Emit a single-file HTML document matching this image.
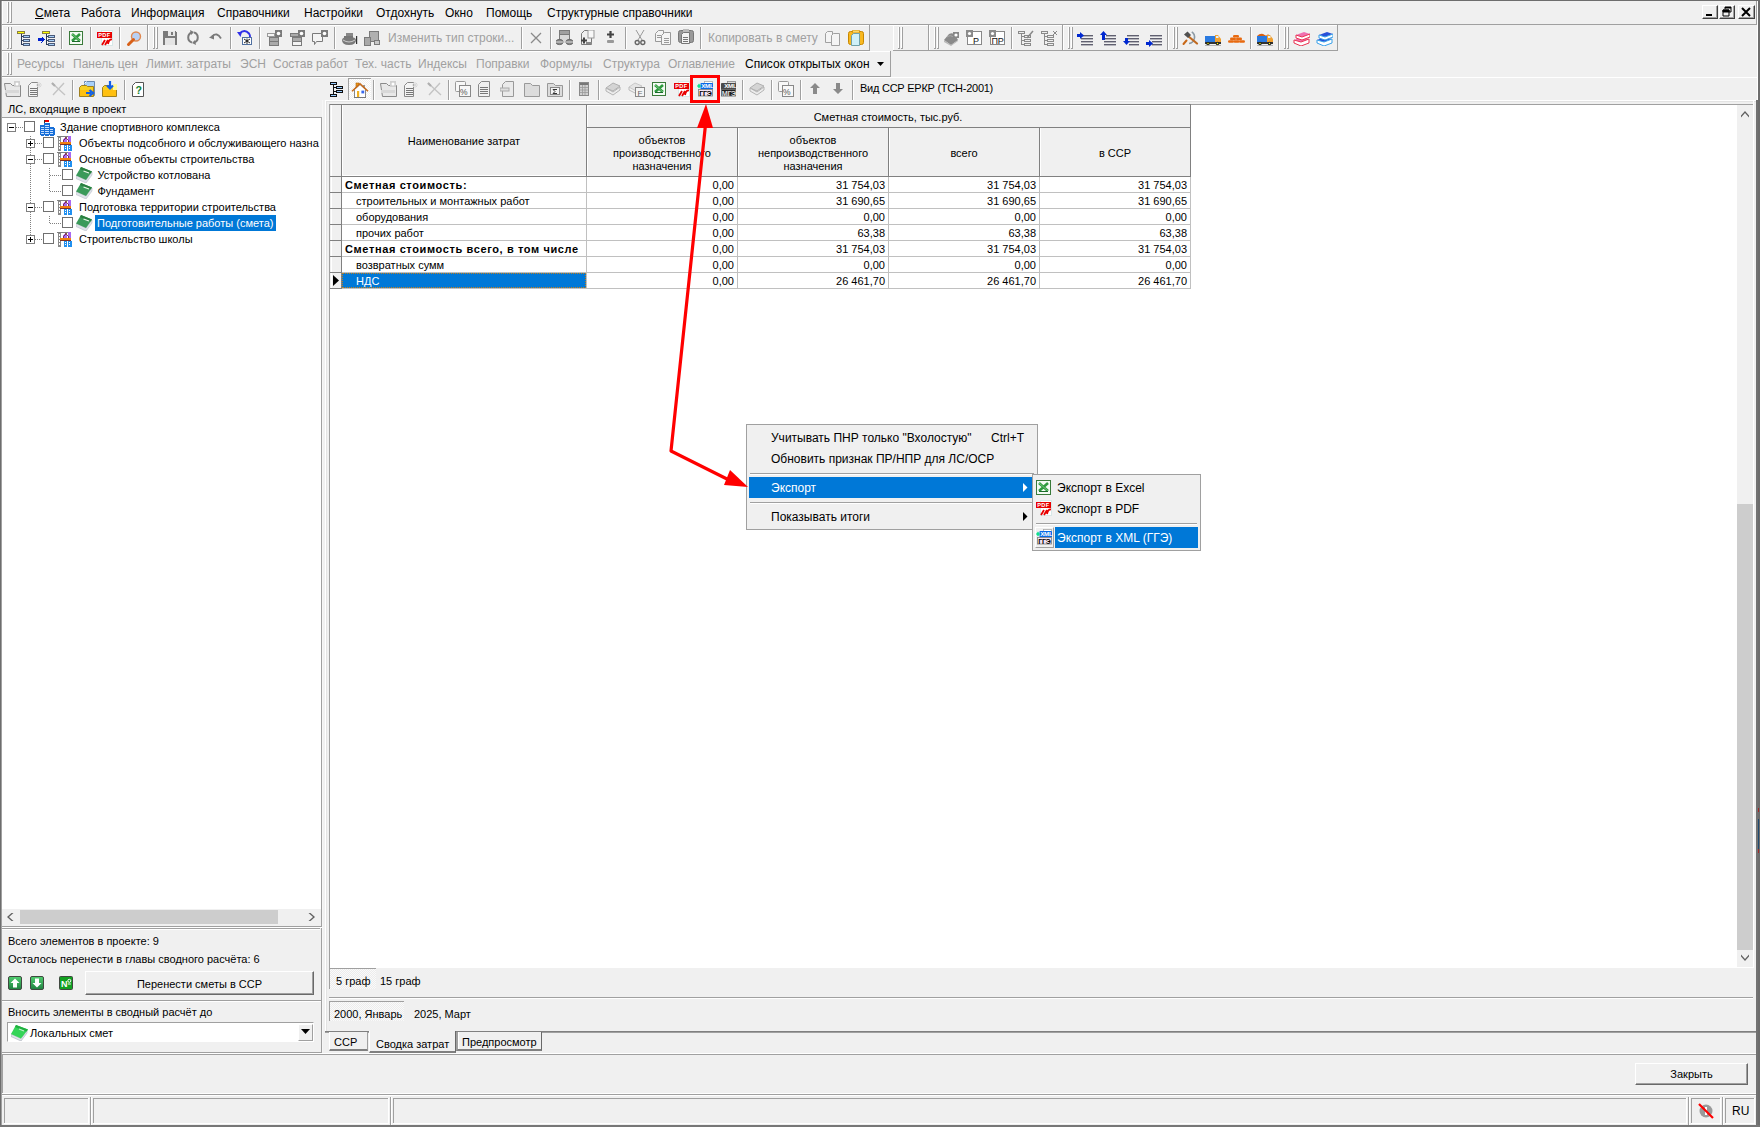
<!DOCTYPE html>
<html><head><meta charset="utf-8"><style>
html,body{margin:0;padding:0;}
body{width:1760px;height:1127px;overflow:hidden;position:relative;background:#f0f0f0;font-family:"Liberation Sans",sans-serif;}
div,svg{position:absolute;}
.t{white-space:nowrap;}
u{text-decoration:underline;text-underline-offset:1px;}
</style></head><body>
<div style="left:2px;top:1px;width:1px;height:23px;background:#ffffff;"></div>
<div style="left:7px;top:2px;width:1px;height:21px;background:#ffffff;"></div>
<div style="left:8px;top:2px;width:1px;height:21px;background:#a0a0a0;"></div>
<div style="left:7px;top:22px;width:2px;height:1px;background:#a0a0a0;"></div>
<div style="left:10px;top:2px;width:1px;height:21px;background:#ffffff;"></div>
<div style="left:11px;top:2px;width:1px;height:21px;background:#a0a0a0;"></div>
<div style="left:10px;top:22px;width:2px;height:1px;background:#a0a0a0;"></div>
<div style="left:2px;top:24px;width:1755px;height:1px;background:#a0a0a0;"></div>
<div style="left:2px;top:25px;width:1336px;height:1px;background:#ffffff;"></div>
<div class="t" style="left:35px;top:6.84px;font-size:12px;line-height:12px;color:#000;"><u>С</u>мета</div>
<div class="t" style="left:81px;top:6.84px;font-size:12px;line-height:12px;color:#000;">Работа</div>
<div class="t" style="left:131px;top:6.84px;font-size:12px;line-height:12px;color:#000;">Информация</div>
<div class="t" style="left:217px;top:6.84px;font-size:12px;line-height:12px;color:#000;">Справочники</div>
<div class="t" style="left:304px;top:6.84px;font-size:12px;line-height:12px;color:#000;">Настройки</div>
<div class="t" style="left:376px;top:6.84px;font-size:12px;line-height:12px;color:#000;">Отдохнуть</div>
<div class="t" style="left:445px;top:6.84px;font-size:12px;line-height:12px;color:#000;">Окно</div>
<div class="t" style="left:486px;top:6.84px;font-size:12px;line-height:12px;color:#000;">Помощь</div>
<div class="t" style="left:547px;top:6.84px;font-size:12px;line-height:12px;color:#000;">Структурные справочники</div>
<div style="left:1702px;top:5px;width:16px;height:14px;background:#f0f0f0;border-top:1px solid #fff;border-left:1px solid #fff;border-right:1px solid #404040;border-bottom:1px solid #404040;box-sizing:border-box;box-shadow:inset -1px -1px 0 #a0a0a0"></div>
<svg style="left:1702px;top:5px" width="16" height="14" viewBox="0 0 16 14"><rect x="4" y="9" width="6" height="2" fill="#000"/></svg>
<div style="left:1719px;top:5px;width:16px;height:14px;background:#f0f0f0;border-top:1px solid #fff;border-left:1px solid #fff;border-right:1px solid #404040;border-bottom:1px solid #404040;box-sizing:border-box;box-shadow:inset -1px -1px 0 #a0a0a0"></div>
<svg style="left:1719px;top:5px" width="16" height="14" viewBox="0 0 16 14"><path d="M6 2h6v5h-2M6 2v2M4 5h6v6H4z M4 5h6v2H4z" fill="none" stroke="#000" stroke-width="1"/><rect x="4" y="5" width="6" height="2" fill="#000"/><rect x="6" y="2" width="6" height="1.5" fill="#000"/></svg>
<div style="left:1738px;top:5px;width:17px;height:14px;background:#f0f0f0;border-top:1px solid #fff;border-left:1px solid #fff;border-right:1px solid #404040;border-bottom:1px solid #404040;box-sizing:border-box;box-shadow:inset -1px -1px 0 #a0a0a0"></div>
<svg style="left:1738px;top:5px" width="17" height="14" viewBox="0 0 17 14"><path d="M4 3l8 8M12 3l-8 8" stroke="#000" stroke-width="2"/></svg>
<div style="left:2px;top:25px;width:146px;height:1px;background:#ffffff;"></div>
<div style="left:2px;top:25px;width:1px;height:26px;background:#ffffff;"></div>
<div style="left:2px;top:50px;width:146px;height:1px;background:#a0a0a0;"></div>
<div style="left:147px;top:25px;width:1px;height:26px;background:#a0a0a0;"></div>
<div style="left:148px;top:25px;width:722px;height:1px;background:#ffffff;"></div>
<div style="left:148px;top:25px;width:1px;height:26px;background:#ffffff;"></div>
<div style="left:148px;top:50px;width:722px;height:1px;background:#a0a0a0;"></div>
<div style="left:869px;top:25px;width:1px;height:26px;background:#a0a0a0;"></div>
<div style="left:893px;top:25px;width:36px;height:1px;background:#ffffff;"></div>
<div style="left:893px;top:25px;width:1px;height:26px;background:#ffffff;"></div>
<div style="left:893px;top:50px;width:36px;height:1px;background:#a0a0a0;"></div>
<div style="left:928px;top:25px;width:1px;height:26px;background:#a0a0a0;"></div>
<div style="left:929px;top:25px;width:134px;height:1px;background:#ffffff;"></div>
<div style="left:929px;top:25px;width:1px;height:26px;background:#ffffff;"></div>
<div style="left:929px;top:50px;width:134px;height:1px;background:#a0a0a0;"></div>
<div style="left:1062px;top:25px;width:1px;height:26px;background:#a0a0a0;"></div>
<div style="left:1063px;top:25px;width:105px;height:1px;background:#ffffff;"></div>
<div style="left:1063px;top:25px;width:1px;height:26px;background:#ffffff;"></div>
<div style="left:1063px;top:50px;width:105px;height:1px;background:#a0a0a0;"></div>
<div style="left:1167px;top:25px;width:1px;height:26px;background:#a0a0a0;"></div>
<div style="left:1168px;top:25px;width:111px;height:1px;background:#ffffff;"></div>
<div style="left:1168px;top:25px;width:1px;height:26px;background:#ffffff;"></div>
<div style="left:1168px;top:50px;width:111px;height:1px;background:#a0a0a0;"></div>
<div style="left:1278px;top:25px;width:1px;height:26px;background:#a0a0a0;"></div>
<div style="left:1279px;top:25px;width:59px;height:1px;background:#ffffff;"></div>
<div style="left:1279px;top:25px;width:1px;height:26px;background:#ffffff;"></div>
<div style="left:1279px;top:50px;width:59px;height:1px;background:#a0a0a0;"></div>
<div style="left:1337px;top:25px;width:1px;height:26px;background:#a0a0a0;"></div>
<div style="left:7px;top:27px;width:1px;height:22px;background:#ffffff;"></div>
<div style="left:8px;top:27px;width:1px;height:22px;background:#a0a0a0;"></div>
<div style="left:7px;top:48px;width:2px;height:1px;background:#a0a0a0;"></div>
<div style="left:10px;top:27px;width:1px;height:22px;background:#ffffff;"></div>
<div style="left:11px;top:27px;width:1px;height:22px;background:#a0a0a0;"></div>
<div style="left:10px;top:48px;width:2px;height:1px;background:#a0a0a0;"></div>
<div style="left:153px;top:27px;width:1px;height:22px;background:#ffffff;"></div>
<div style="left:154px;top:27px;width:1px;height:22px;background:#a0a0a0;"></div>
<div style="left:153px;top:48px;width:2px;height:1px;background:#a0a0a0;"></div>
<div style="left:156px;top:27px;width:1px;height:22px;background:#ffffff;"></div>
<div style="left:157px;top:27px;width:1px;height:22px;background:#a0a0a0;"></div>
<div style="left:156px;top:48px;width:2px;height:1px;background:#a0a0a0;"></div>
<div style="left:898px;top:27px;width:1px;height:22px;background:#ffffff;"></div>
<div style="left:899px;top:27px;width:1px;height:22px;background:#a0a0a0;"></div>
<div style="left:898px;top:48px;width:2px;height:1px;background:#a0a0a0;"></div>
<div style="left:901px;top:27px;width:1px;height:22px;background:#ffffff;"></div>
<div style="left:902px;top:27px;width:1px;height:22px;background:#a0a0a0;"></div>
<div style="left:901px;top:48px;width:2px;height:1px;background:#a0a0a0;"></div>
<div style="left:934px;top:27px;width:1px;height:22px;background:#ffffff;"></div>
<div style="left:935px;top:27px;width:1px;height:22px;background:#a0a0a0;"></div>
<div style="left:934px;top:48px;width:2px;height:1px;background:#a0a0a0;"></div>
<div style="left:937px;top:27px;width:1px;height:22px;background:#ffffff;"></div>
<div style="left:938px;top:27px;width:1px;height:22px;background:#a0a0a0;"></div>
<div style="left:937px;top:48px;width:2px;height:1px;background:#a0a0a0;"></div>
<div style="left:1068px;top:27px;width:1px;height:22px;background:#ffffff;"></div>
<div style="left:1069px;top:27px;width:1px;height:22px;background:#a0a0a0;"></div>
<div style="left:1068px;top:48px;width:2px;height:1px;background:#a0a0a0;"></div>
<div style="left:1071px;top:27px;width:1px;height:22px;background:#ffffff;"></div>
<div style="left:1072px;top:27px;width:1px;height:22px;background:#a0a0a0;"></div>
<div style="left:1071px;top:48px;width:2px;height:1px;background:#a0a0a0;"></div>
<div style="left:1173px;top:27px;width:1px;height:22px;background:#ffffff;"></div>
<div style="left:1174px;top:27px;width:1px;height:22px;background:#a0a0a0;"></div>
<div style="left:1173px;top:48px;width:2px;height:1px;background:#a0a0a0;"></div>
<div style="left:1176px;top:27px;width:1px;height:22px;background:#ffffff;"></div>
<div style="left:1177px;top:27px;width:1px;height:22px;background:#a0a0a0;"></div>
<div style="left:1176px;top:48px;width:2px;height:1px;background:#a0a0a0;"></div>
<div style="left:1284px;top:27px;width:1px;height:22px;background:#ffffff;"></div>
<div style="left:1285px;top:27px;width:1px;height:22px;background:#a0a0a0;"></div>
<div style="left:1284px;top:48px;width:2px;height:1px;background:#a0a0a0;"></div>
<div style="left:1287px;top:27px;width:1px;height:22px;background:#ffffff;"></div>
<div style="left:1288px;top:27px;width:1px;height:22px;background:#a0a0a0;"></div>
<div style="left:1287px;top:48px;width:2px;height:1px;background:#a0a0a0;"></div>
<div style="left:61px;top:27px;width:1px;height:22px;background:#a0a0a0;"></div>
<div style="left:62px;top:27px;width:1px;height:22px;background:#ffffff;"></div>
<div style="left:90px;top:27px;width:1px;height:22px;background:#a0a0a0;"></div>
<div style="left:91px;top:27px;width:1px;height:22px;background:#ffffff;"></div>
<div style="left:119px;top:27px;width:1px;height:22px;background:#a0a0a0;"></div>
<div style="left:120px;top:27px;width:1px;height:22px;background:#ffffff;"></div>
<div style="left:230px;top:27px;width:1px;height:22px;background:#a0a0a0;"></div>
<div style="left:231px;top:27px;width:1px;height:22px;background:#ffffff;"></div>
<div style="left:259px;top:27px;width:1px;height:22px;background:#a0a0a0;"></div>
<div style="left:260px;top:27px;width:1px;height:22px;background:#ffffff;"></div>
<div style="left:334px;top:27px;width:1px;height:22px;background:#a0a0a0;"></div>
<div style="left:335px;top:27px;width:1px;height:22px;background:#ffffff;"></div>
<div style="left:521px;top:27px;width:1px;height:22px;background:#a0a0a0;"></div>
<div style="left:522px;top:27px;width:1px;height:22px;background:#ffffff;"></div>
<div style="left:550px;top:27px;width:1px;height:22px;background:#a0a0a0;"></div>
<div style="left:551px;top:27px;width:1px;height:22px;background:#ffffff;"></div>
<div style="left:625px;top:27px;width:1px;height:22px;background:#a0a0a0;"></div>
<div style="left:626px;top:27px;width:1px;height:22px;background:#ffffff;"></div>
<div style="left:700px;top:27px;width:1px;height:22px;background:#a0a0a0;"></div>
<div style="left:701px;top:27px;width:1px;height:22px;background:#ffffff;"></div>
<div style="left:1011px;top:27px;width:1px;height:22px;background:#a0a0a0;"></div>
<div style="left:1012px;top:27px;width:1px;height:22px;background:#ffffff;"></div>
<div style="left:1250px;top:27px;width:1px;height:22px;background:#a0a0a0;"></div>
<div style="left:1251px;top:27px;width:1px;height:22px;background:#ffffff;"></div>
<svg style="left:17px;top:31px" width="18" height="16" viewBox="0 0 18 16"><g shape-rendering="crispEdges"><rect x="0" y="0" width="8" height="3" fill="#8a8040"/><rect x="1" y="1" width="6" height="1" fill="#ffff00"/><rect x="4" y="3" width="1" height="11" fill="#2a3a5a"/><rect x="5" y="5" width="1" height="1" fill="#2a3a5a"/><rect x="6" y="4" width="7" height="3" fill="#4a5a7a"/><rect x="7" y="5" width="5" height="1" fill="#a8d0f8"/><rect x="5" y="9" width="1" height="1" fill="#2a3a5a"/><rect x="6" y="8" width="7" height="3" fill="#4a5a7a"/><rect x="7" y="9" width="5" height="1" fill="#a8d0f8"/><rect x="5" y="13" width="1" height="1" fill="#2a3a5a"/><rect x="6" y="12" width="7" height="3" fill="#4a5a7a"/><rect x="7" y="13" width="5" height="1" fill="#a8d0f8"/></g></svg>
<svg style="left:38px;top:31px" width="18" height="16" viewBox="0 0 18 16"><g shape-rendering="crispEdges"><rect x="4" y="0" width="8" height="3" fill="#8a8040"/><rect x="5" y="1" width="6" height="1" fill="#ffff00"/><rect x="8" y="3" width="1" height="11" fill="#2a3a5a"/><rect x="9" y="5" width="1" height="1" fill="#2a3a5a"/><rect x="10" y="4" width="7" height="3" fill="#4a5a7a"/><rect x="11" y="5" width="5" height="1" fill="#a8d0f8"/><rect x="9" y="9" width="1" height="1" fill="#2a3a5a"/><rect x="10" y="8" width="7" height="3" fill="#4a5a7a"/><rect x="11" y="9" width="5" height="1" fill="#a8d0f8"/><rect x="9" y="13" width="1" height="1" fill="#2a3a5a"/><rect x="10" y="12" width="7" height="3" fill="#4a5a7a"/><rect x="11" y="13" width="5" height="1" fill="#a8d0f8"/><rect x="0" y="7" width="4" height="3" fill="#0020d0"/><path d="M3.5 5.5L7 8.5 3.5 11.5z" fill="#0020d0"/></g></svg>
<svg style="left:69px;top:31px" width="14" height="14" viewBox="0 0 14 14"><rect x="0" y="0" width="14" height="14" fill="#3a7a3a"/><rect x="1" y="1" width="12" height="12" fill="#f4fbf4"/><path d="M3 3L11 10M11 3L3 10" stroke="#2e9a3e" stroke-width="2.6"/><path d="M3 3L11 10" stroke="#a0e0a0" stroke-width="0.6"/><rect x="3" y="10" width="8" height="1" fill="#1a6a2a"/></svg>
<svg style="left:97px;top:30px" width="16" height="16" viewBox="0 0 16 16"><rect x="4" y="0" width="12" height="16" fill="#d8e8e8"/><rect x="5" y="1" width="10" height="14" fill="#ffffff"/><rect x="0" y="2" width="15" height="6" fill="#e80000"/><text x="1.3" y="7.2" font-size="5.6" font-weight="bold" fill="#fff" font-family="Liberation Sans" letter-spacing="0.3">PDF</text><path d="M5 15l3-5M8 15l3-5M11 14q1-5 4-4.5" stroke="#e80000" stroke-width="1.8" fill="none"/></svg>
<svg style="left:126px;top:31px" width="16" height="16" viewBox="0 0 16 16"><circle cx="10" cy="5.5" r="4.5" fill="#b8d0f4" stroke="#e08850" stroke-width="1.4"/><path d="M7.5 8.5L2.5 13.5" stroke="#d86018" stroke-width="3" stroke-linecap="round"/></svg>
<svg style="left:163px;top:31px" width="17" height="17" viewBox="0 0 17 17"><g shape-rendering="crispEdges"><rect x="0" y="0" width="14" height="14" fill="#7a7a7a"/><rect x="5" y="0" width="7" height="5" fill="#e8e8e8"/><rect x="8" y="1" width="2" height="3" fill="#7a7a7a"/><rect x="2" y="7" width="10" height="7" fill="#e4e4e4"/><rect x="13" y="0" width="1" height="1" fill="#f0f0f0"/></g></svg>
<svg style="left:186px;top:30px" width="17" height="17" viewBox="0 0 17 17"><path d="M6 2.5A5.2 5.2 0 0 0 6 12.5M8 2.5A5.2 5.2 0 0 1 8 12.5" stroke="#7a7a7a" stroke-width="2" fill="none"/><path d="M4 0l4 2-3 3zM10 15l-4-2 3-3z" fill="#7a7a7a"/></svg>
<svg style="left:209px;top:31px" width="17" height="17" viewBox="0 0 17 17"><path d="M3 5.5q5-5 9 2" stroke="#7a7a7a" stroke-width="1.8" fill="none"/><path d="M0 6.5l5-3 0 5z" fill="#7a7a7a"/></svg>
<svg style="left:237px;top:30px" width="16" height="16" viewBox="0 0 16 16"><path d="M2.5 3.5q5-5 9.5 0 1.5 2 1 4" stroke="#3030e8" stroke-width="2" fill="none"/><path d="M0 2l5 0-1.5 5z" fill="#3030e8"/><rect x="5.5" y="7.5" width="9" height="7" fill="#fff" stroke="#5070a0"/><path d="M7 9l6 4M13 9l-6 4M10 8.5v5.5" stroke="#111" stroke-width="0.9"/></svg>
<svg style="left:267px;top:30px" width="17" height="17" viewBox="0 0 17 17"><rect x="0" y="3" width="12" height="4" fill="#9a9a9a"/><rect x="1" y="4" width="6" height="2" fill="#f4f4f4"/><rect x="2" y="7" width="10" height="9" fill="#7a7a7a"/><rect x="3" y="8" width="8" height="3" fill="#aaa"/><rect x="3" y="12" width="8" height="3" fill="#aaa"/><rect x="8" y="0" width="7" height="7" fill="#7a7a7a"/><circle cx="11.5" cy="3.5" r="1.8" fill="#fff"/></svg>
<svg style="left:290px;top:30px" width="17" height="17" viewBox="0 0 17 17"><rect x="0" y="3" width="12" height="4" fill="#7a7a7a"/><rect x="1" y="4" width="10" height="2" fill="#aaa"/><rect x="2" y="7" width="10" height="9" fill="#7a7a7a"/><rect x="3" y="8" width="8" height="3" fill="#aaa"/><rect x="3" y="12" width="8" height="3" fill="#f4f4f4"/><rect x="8" y="0" width="7" height="7" fill="#7a7a7a"/><circle cx="11.5" cy="3.5" r="1.8" fill="#fff"/></svg>
<svg style="left:311px;top:30px" width="17" height="17" viewBox="0 0 17 17"><path d="M1.5 3.5h10v8h-6l-2 3v-3h-2z" fill="#f4f4f4" stroke="#7a7a7a"/><rect x="10" y="0" width="7" height="7" fill="#7a7a7a"/><circle cx="13.5" cy="3.5" r="1.8" fill="#fff"/></svg>
<svg style="left:341px;top:32px" width="17" height="17" viewBox="0 0 17 17"><path d="M1 8q0-3 7-3t7 3q0 5-7 5t-7-5z" fill="#7a7a7a"/><rect x="5" y="1" width="7" height="3" fill="#888"/><rect x="3" y="4" width="9" height="2" fill="#777"/><path d="M2 8q6 4 12 0" stroke="#ccc" fill="none"/><rect x="15" y="4" width="1.2" height="8" fill="#333"/></svg>
<svg style="left:364px;top:31px" width="17" height="17" viewBox="0 0 17 17"><g shape-rendering="crispEdges"><rect x="5" y="0" width="10" height="11" fill="#7a7a7a"/><rect x="6" y="1" width="8" height="9" fill="#b0b0b0"/><rect x="0" y="6" width="7" height="9" fill="#7a7a7a"/><rect x="1" y="7" width="5" height="7" fill="#a8a8a8"/><rect x="10" y="9" width="6" height="5" fill="#7a7a7a"/><rect x="11" y="10" width="4" height="3" fill="#c8c8c8"/></g></svg>
<div class="t" style="left:388px;top:31.84px;font-size:12px;line-height:12px;color:#a0a0a0;">Изменить тип строки...</div>
<svg style="left:530px;top:32px" width="17" height="17" viewBox="0 0 17 17"><path d="M1 1l10 10M11 1L1 11" stroke="#8a8a8a" stroke-width="1.3"/></svg>
<svg style="left:556px;top:30px" width="17" height="17" viewBox="0 0 17 17"><rect x="3" y="0" width="11" height="13" fill="#7a7a7a"/><rect x="4" y="1" width="9" height="3" fill="#a0a0a0"/><rect x="4" y="5" width="9" height="8" fill="#d8d8d8"/><ellipse cx="3.5" cy="12" rx="3.5" ry="2.6" fill="#888" stroke="#666"/><ellipse cx="13.5" cy="12" rx="3.5" ry="2.6" fill="#888" stroke="#666"/><path d="M0 12h7M10 12h7" stroke="#ddd"/></svg>
<svg style="left:580px;top:30px" width="17" height="17" viewBox="0 0 17 17"><path d="M1.5 3.5l3-3h7v14h-10z" fill="#f0f0f0" stroke="#7a7a7a"/><rect x="8" y="0" width="6" height="8" fill="#f8f8f8" stroke="#999"/><path d="M1 10.5h6M4 7.5v6" stroke="#444" stroke-width="2"/><rect x="6" y="12" width="6" height="2" fill="#888"/></svg>
<svg style="left:607px;top:31px" width="17" height="17" viewBox="0 0 17 17"><path d="M0 3.5h7M3.5 0v7" stroke="#444" stroke-width="2.2"/><rect x="0" y="9" width="7" height="3" rx="1" fill="#999"/></svg>
<svg style="left:634px;top:30px" width="17" height="17" viewBox="0 0 17 17"><path d="M2 0l6 10M10 0L4 10" stroke="#999" stroke-width="1"/><circle cx="3.2" cy="12.5" r="2" fill="none" stroke="#666" stroke-width="1.4"/><circle cx="8.8" cy="12.5" r="2" fill="none" stroke="#666" stroke-width="1.4"/></svg>
<svg style="left:655px;top:30px" width="17" height="17" viewBox="0 0 17 17"><path d="M0.5 3.5l3-3h5v11h-8z" fill="#f4f4f4" stroke="#999"/><path d="M6.5 5.5l3-3h6v12h-9z" fill="#f4f4f4" stroke="#999"/><path d="M9 8.5h5M9 10.5h5M9 12.5h5M2 5.5h4M2 7.5h4" stroke="#999"/></svg>
<svg style="left:678px;top:29px" width="17" height="17" viewBox="0 0 17 17"><rect x="0.5" y="1.5" width="15" height="12" rx="2" fill="#999" stroke="#777"/><rect x="5" y="0" width="6" height="3" fill="#bbb"/><path d="M3.5 5.5l2-2h6v11h-8z" fill="#f4f4f4" stroke="#777"/><path d="M5 8.5h5M5 10.5h5M5 12.5h5" stroke="#777"/></svg>
<div class="t" style="left:708px;top:31.84px;font-size:12px;line-height:12px;color:#a0a0a0;">Копировать в смету</div>
<svg style="left:825px;top:31px" width="17" height="17" viewBox="0 0 17 17"><path d="M0.5 2.5l2-2h5v11h-7z" fill="#f4f4f4" stroke="#a0a0a0"/><path d="M6.5 4.5l2-2h6v12h-8z" fill="#f4f4f4" stroke="#a0a0a0"/></svg>
<svg style="left:848px;top:30px" width="17" height="16" viewBox="0 0 17 16"><rect x="0.5" y="1.5" width="15" height="13" rx="2" fill="#f8b820" stroke="#c88800"/><rect x="4.5" y="0" width="7" height="3" rx="1" fill="#ffd868" stroke="#c88800" stroke-width="0.8"/><path d="M3.5 5.5l2-2h6v12h-8z" fill="#d0f0f8" stroke="#70a0a8"/></svg>
<svg style="left:943px;top:31px" width="17" height="17" viewBox="0 0 17 17"><path d="M1 9l5-6q4-2 6 1l3 5-7 5z" fill="#8a8a8a"/><path d="M1 9v2l7 4 7-5v-1l-7 5z" fill="#b8b8b8"/><path d="M4 6q4-3 7 1" stroke="#aaa" fill="none"/><rect x="10" y="1" width="6" height="6" fill="#888"/><circle cx="13" cy="4" r="1.6" fill="#fff"/></svg>
<svg style="left:966px;top:30px" width="17" height="17" viewBox="0 0 17 17"><rect x="1" y="1" width="15" height="14" fill="#888"/><rect x="2" y="2" width="13" height="12" fill="#fff"/><rect x="0" y="0" width="7" height="7" fill="#8a8a8a"/><circle cx="3.5" cy="3.5" r="1.6" fill="#fff"/><text x="7" y="13.5" font-size="9" font-family="Liberation Sans" fill="#111">P</text></svg>
<svg style="left:989px;top:30px" width="17" height="17" viewBox="0 0 17 17"><rect x="1" y="1" width="15" height="14" fill="#888"/><rect x="2" y="2" width="13" height="12" fill="#fff"/><rect x="0" y="0" width="7" height="7" fill="#8a8a8a"/><circle cx="3.5" cy="3.5" r="1.6" fill="#fff"/><text x="2.5" y="13.5" font-size="9" font-family="Liberation Sans" fill="#111" letter-spacing="-0.3">ПР</text></svg>
<svg style="left:1018px;top:30px" width="17" height="17" viewBox="0 0 17 17"><rect x="0" y="1" width="7" height="3" fill="#8a8a8a"/><rect x="1" y="2" width="5" height="1" fill="#eee"/><rect x="3" y="4" width="1" height="11" fill="#8a8a8a"/><rect x="4" y="6" width="2" height="1" fill="#8a8a8a"/><rect x="6" y="5" width="7" height="3" fill="#8a8a8a"/><rect x="7" y="6" width="5" height="1" fill="#eee"/><rect x="4" y="10" width="2" height="1" fill="#8a8a8a"/><rect x="6" y="9" width="7" height="3" fill="#8a8a8a"/><rect x="7" y="10" width="5" height="1" fill="#eee"/><rect x="4" y="14" width="2" height="1" fill="#8a8a8a"/><rect x="6" y="13" width="7" height="3" fill="#8a8a8a"/><rect x="7" y="14" width="5" height="1" fill="#eee"/><path d="M9 8l6-7" stroke="#888" stroke-width="1.5"/></svg>
<svg style="left:1041px;top:30px" width="17" height="17" viewBox="0 0 17 17"><rect x="0" y="1" width="7" height="3" fill="#8a8a8a"/><rect x="1" y="2" width="5" height="1" fill="#eee"/><rect x="3" y="4" width="1" height="11" fill="#8a8a8a"/><rect x="4" y="6" width="2" height="1" fill="#8a8a8a"/><rect x="6" y="5" width="7" height="3" fill="#8a8a8a"/><rect x="7" y="6" width="5" height="1" fill="#eee"/><rect x="4" y="10" width="2" height="1" fill="#8a8a8a"/><rect x="6" y="9" width="7" height="3" fill="#8a8a8a"/><rect x="7" y="10" width="5" height="1" fill="#eee"/><rect x="4" y="14" width="2" height="1" fill="#8a8a8a"/><rect x="6" y="13" width="7" height="3" fill="#8a8a8a"/><rect x="7" y="14" width="5" height="1" fill="#eee"/><path d="M12 1l4 4M16 1l-4 4" stroke="#888"/></svg>
<svg style="left:1077px;top:31px" width="17" height="17" viewBox="0 0 17 17"><rect x="6" y="4" width="10" height="1.4" fill="#606070"/><rect x="4" y="7" width="12" height="1.4" fill="#606070"/><rect x="4" y="10" width="12" height="1.4" fill="#606070"/><rect x="4" y="13" width="12" height="1.4" fill="#606070"/><rect x="0" y="3" width="4" height="3" fill="#0028d0"/><path d="M3 1l4 3.5-4 3.5z" fill="#0028d0"/></svg>
<svg style="left:1100px;top:31px" width="17" height="17" viewBox="0 0 17 17"><rect x="6" y="4" width="10" height="1.4" fill="#606070"/><rect x="4" y="7" width="12" height="1.4" fill="#606070"/><rect x="4" y="10" width="12" height="1.4" fill="#606070"/><rect x="4" y="13" width="12" height="1.4" fill="#606070"/><rect x="2" y="3" width="3" height="6" fill="#0028d0"/><path d="M0 4l3.5-4 3.5 4z" fill="#0028d0"/></svg>
<svg style="left:1123px;top:31px" width="17" height="17" viewBox="0 0 17 17"><rect x="4" y="4" width="12" height="1.4" fill="#606070"/><rect x="4" y="7" width="12" height="1.4" fill="#606070"/><rect x="6" y="10" width="10" height="1.4" fill="#606070"/><rect x="6" y="13" width="10" height="1.4" fill="#606070"/><rect x="2" y="7" width="3" height="5" fill="#0028d0"/><path d="M0 10l3.5 4 3.5-4z" fill="#0028d0"/></svg>
<svg style="left:1146px;top:31px" width="17" height="17" viewBox="0 0 17 17"><rect x="4" y="4" width="12" height="1.4" fill="#606070"/><rect x="4" y="7" width="12" height="1.4" fill="#606070"/><rect x="6" y="10" width="10" height="1.4" fill="#606070"/><rect x="6" y="13" width="10" height="1.4" fill="#606070"/><rect x="0" y="11" width="4" height="3" fill="#0028d0"/><path d="M3 9l4 3.5-4 3.5z" fill="#0028d0"/></svg>
<svg style="left:1182px;top:31px" width="17" height="15" viewBox="0 0 17 15"><path d="M9.8 0.8A6.5 6.5 0 0 1 7 12.5" stroke="#8c9aa4" stroke-width="1.6" fill="none"/><path d="M1.5 13l3-3.5" stroke="#c86818" stroke-width="2" stroke-linecap="round"/><path d="M6 5l9 7.5" stroke="#c06a20" stroke-width="2.2" stroke-linecap="round"/><path d="M2 3.5l3.5-3 3.5 3.5-3 3z" fill="#505050"/></svg>
<svg style="left:1205px;top:33px" width="17" height="14" viewBox="0 0 17 14"><rect x="0" y="3" width="10" height="6" fill="#2a7ae0"/><path d="M10 2h3l3 4v4h-6z" fill="#f0a030"/><rect x="11" y="3" width="2.5" height="2" fill="#e0f0ff"/><rect x="0" y="9" width="16" height="2" fill="#333"/><circle cx="3" cy="10.5" r="1.8" fill="#222"/><circle cx="12.5" cy="10.5" r="1.8" fill="#222"/><circle cx="3" cy="10.5" r="0.7" fill="#ff0"/><circle cx="12.5" cy="10.5" r="0.7" fill="#ff0"/><rect x="0" y="12" width="16" height="1" fill="#888" opacity="0.6"/></svg>
<svg style="left:1228px;top:35px" width="17" height="8" viewBox="0 0 17 8"><rect x="5" y="0" width="6" height="2.6" rx="1.3" fill="#e86a10"/><rect x="2" y="2.6" width="6" height="2.6" rx="1.3" fill="#e86a10"/><rect x="8" y="2.6" width="6" height="2.6" rx="1.3" fill="#e86a10"/><rect x="0" y="5.2" width="6" height="2.6" rx="1.3" fill="#e86a10"/><rect x="5.5" y="5.2" width="6" height="2.6" rx="1.3" fill="#e86a10"/><rect x="11" y="5.2" width="6" height="2.6" rx="1.3" fill="#e86a10"/></svg>
<svg style="left:1257px;top:33px" width="17" height="14" viewBox="0 0 17 14"><path d="M1 4q3-3 6-1t5-1" stroke="#d86010" stroke-width="2.6" fill="none"/><rect x="0" y="3" width="10" height="6" fill="#2a7ae0"/><path d="M10 2h3l3 4v4h-6z" fill="#f0a030"/><rect x="11" y="3" width="2.5" height="2" fill="#e0f0ff"/><rect x="0" y="9" width="16" height="2" fill="#333"/><circle cx="3" cy="10.5" r="1.8" fill="#222"/><circle cx="12.5" cy="10.5" r="1.8" fill="#222"/><circle cx="3" cy="10.5" r="0.7" fill="#ff0"/><circle cx="12.5" cy="10.5" r="0.7" fill="#ff0"/><rect x="0" y="12" width="16" height="1" fill="#888" opacity="0.6"/></svg>
<svg style="left:1293px;top:32px" width="17" height="14" viewBox="0 0 17 14"><path d="M1 8l8-3 7 2-8 3z" fill="#f070b0"/><path d="M1 8v3l7 3 8-3V7l-8 3z" fill="#fff" stroke="#e83050" stroke-width="1"/><path d="M3 3l8-3 6 2-8 3z" fill="#f070b0"/><path d="M3 3v3l6 2 8-3V2l-8 3z" fill="#fff" stroke="#e83050" stroke-width="1"/></svg>
<svg style="left:1316px;top:32px" width="17" height="14" viewBox="0 0 17 14"><path d="M1 8l8-3 7 2-8 3z" fill="#2850d8"/><path d="M1 8v3l7 3 8-3V7l-8 3z" fill="#fff" stroke="#38a0e8" stroke-width="1"/><path d="M3 3l8-3 6 2-8 3z" fill="#2850d8"/><path d="M3 3v3l6 2 8-3V2l-8 3z" fill="#fff" stroke="#38a0e8" stroke-width="1"/></svg>
<div style="left:2px;top:51px;width:889px;height:1px;background:#ffffff;"></div>
<div style="left:2px;top:51px;width:1px;height:26px;background:#ffffff;"></div>
<div style="left:2px;top:76px;width:889px;height:1px;background:#a0a0a0;"></div>
<div style="left:890px;top:51px;width:1px;height:26px;background:#a0a0a0;"></div>
<div style="left:7px;top:53px;width:1px;height:22px;background:#ffffff;"></div>
<div style="left:8px;top:53px;width:1px;height:22px;background:#a0a0a0;"></div>
<div style="left:7px;top:74px;width:2px;height:1px;background:#a0a0a0;"></div>
<div style="left:10px;top:53px;width:1px;height:22px;background:#ffffff;"></div>
<div style="left:11px;top:53px;width:1px;height:22px;background:#a0a0a0;"></div>
<div style="left:10px;top:74px;width:2px;height:1px;background:#a0a0a0;"></div>
<div class="t" style="left:17px;top:57.84px;font-size:12px;line-height:12px;color:#a0a0a0;">Ресурсы</div>
<div class="t" style="left:73px;top:57.84px;font-size:12px;line-height:12px;color:#a0a0a0;">Панель цен</div>
<div class="t" style="left:146px;top:57.84px;font-size:12px;line-height:12px;color:#a0a0a0;">Лимит. затраты</div>
<div class="t" style="left:240px;top:57.84px;font-size:12px;line-height:12px;color:#a0a0a0;">ЭСН</div>
<div class="t" style="left:273px;top:57.84px;font-size:12px;line-height:12px;color:#a0a0a0;">Состав работ</div>
<div class="t" style="left:355px;top:57.84px;font-size:12px;line-height:12px;color:#a0a0a0;">Тех. часть</div>
<div class="t" style="left:418px;top:57.84px;font-size:12px;line-height:12px;color:#a0a0a0;">Индексы</div>
<div class="t" style="left:476px;top:57.84px;font-size:12px;line-height:12px;color:#a0a0a0;">Поправки</div>
<div class="t" style="left:540px;top:57.84px;font-size:12px;line-height:12px;color:#a0a0a0;">Формулы</div>
<div class="t" style="left:603px;top:57.84px;font-size:12px;line-height:12px;color:#a0a0a0;">Структура</div>
<div class="t" style="left:668px;top:57.84px;font-size:12px;line-height:12px;color:#a0a0a0;">Оглавление</div>
<div class="t" style="left:745px;top:57.84px;font-size:12px;line-height:12px;color:#000;">Список открытых окон</div>
<svg style="left:877px;top:62px" width="8" height="5" viewBox="0 0 8 5"><path d="M0 0h7L3.5 4z" fill="#000"/></svg>
<div style="left:2px;top:77px;width:1755px;height:1px;background:#ffffff;"></div>
<svg style="left:4px;top:81px" width="17" height="17" viewBox="0 0 17 17"><path d="M0.5 2.5h6l2 2h8v11h-14z" fill="#e8e8e8" stroke="#8a8a8a"/><rect x="1" y="9" width="14" height="3" fill="#d8d8d8"/><rect x="10" y="0" width="6" height="6" fill="#d0d0d0"/><circle cx="13" cy="3" r="1.5" fill="#fff"/></svg>
<svg style="left:28px;top:82px" width="17" height="17" viewBox="0 0 17 17"><path d="M0.5 3.5l3-3h6v14h-9z" fill="#f4f4f4" stroke="#8a8a8a"/><path d="M2 6.5h7M2 8.5h7M2 10.5h7M2 12.5h7" stroke="#777"/><path d="M11 0v6M8 3h6M9 1l4 4M13 1l-4 4" stroke="#d8d8d8"/></svg>
<svg style="left:51px;top:82px" width="17" height="17" viewBox="0 0 17 17"><path d="M1 1l13 12M13 1L2 13" stroke="#c4c4c4" stroke-width="1.4"/><path d="M1 1l3 3" stroke="#b0b0b0" stroke-width="2.2"/></svg>
<div style="left:72px;top:80px;width:1px;height:20px;background:#a0a0a0;"></div>
<div style="left:73px;top:80px;width:1px;height:20px;background:#ffffff;"></div>
<svg style="left:79px;top:81px" width="17" height="16" viewBox="0 0 17 16"><path d="M5.5 0.5h10v14h-10z" fill="#a8d0f8" stroke="#6a8ab0"/><path d="M5.5 2.5l2-2" stroke="#fff"/><path d="M0.5 6.5l2-2h5l1 1h6v10h-14z" fill="#f8d020" stroke="#a08020"/><path d="M1 9h13v6H1z" fill="#ffc010"/><path d="M7 12h5M10.5 9l3.5 3-3.5 3" stroke="#1060e8" stroke-width="2.2" fill="none"/></svg>
<svg style="left:102px;top:81px" width="17" height="16" viewBox="0 0 17 16"><path d="M0.5 6.5l2-2h5l1 1h6v10h-14z" fill="#f8d020" stroke="#a08020"/><path d="M1 9h13v6H1z" fill="#ffc010"/><rect x="11" y="3" width="4" height="6" fill="#fff8a0"/><path d="M8 0v7M5 4.5l3 3 3-3" stroke="#1060e8" stroke-width="2.2" fill="none"/></svg>
<div style="left:124px;top:80px;width:1px;height:20px;background:#a0a0a0;"></div>
<div style="left:125px;top:80px;width:1px;height:20px;background:#ffffff;"></div>
<svg style="left:132px;top:82px" width="13" height="16" viewBox="0 0 13 16"><path d="M0.5 3.5l3-3h8v14h-11z" fill="#fff" stroke="#555"/><text x="3.5" y="12" font-size="10.5" font-weight="bold" fill="#108030" font-family="Liberation Sans">?</text></svg>
<div class="t" style="left:8px;top:103.69px;font-size:11px;line-height:11px;color:#000;">ЛС, входящие в проект</div>
<svg style="left:330px;top:82px" width="13" height="15" viewBox="0 0 13 15"><g shape-rendering="crispEdges"><rect x="0" y="0" width="7" height="3" fill="#111"/><rect x="1" y="1" width="5" height="1" fill="#9cf"/><rect x="3" y="3" width="1" height="10" fill="#111"/><rect x="4" y="5" width="2" height="1" fill="#111"/><rect x="4" y="9" width="2" height="1" fill="#111"/><rect x="6" y="4" width="7" height="3" fill="#111"/><rect x="7" y="5" width="5" height="1" fill="#9cf"/><rect x="6" y="8" width="7" height="3" fill="#111"/><rect x="7" y="9" width="5" height="1" fill="#9cf"/><rect x="0" y="12" width="7" height="3" fill="#111"/><rect x="1" y="13" width="5" height="1" fill="#9cf"/></g></svg>
<div style="left:348px;top:78px;width:23px;height:22px;background:repeating-conic-gradient(#fff 0 25%, #f0f0f0 0 50%) 0 0/2px 2px;border-left:1px solid #a0a0a0;border-top:1px solid #a0a0a0;box-sizing:border-box"></div>
<svg style="left:351px;top:81px" width="18" height="17" viewBox="0 0 18 17"><rect x="5" y="2" width="3" height="5" fill="#e89818" stroke="#b06010" stroke-width="0.6"/><rect x="12" y="4" width="2" height="3" fill="#999"/><path d="M3.5 8.5L9 3.5 14.5 8.5v8h-11z" fill="#fff" stroke="#888" stroke-width="1"/><path d="M1 10.3L9 2.8 17 10.3" stroke="#c86a18" stroke-width="1.5" fill="none"/><rect x="6" y="10" width="2.2" height="6.5" fill="#f0b020"/><rect x="10.4" y="9.6" width="2.8" height="2.8" fill="#3868f0"/><rect x="3" y="16" width="12" height="1" fill="#777"/></svg>
<div style="left:373px;top:80px;width:1px;height:20px;background:#a0a0a0;"></div>
<div style="left:374px;top:80px;width:1px;height:20px;background:#ffffff;"></div>
<div style="left:448px;top:80px;width:1px;height:20px;background:#a0a0a0;"></div>
<div style="left:449px;top:80px;width:1px;height:20px;background:#ffffff;"></div>
<div style="left:569px;top:80px;width:1px;height:20px;background:#a0a0a0;"></div>
<div style="left:570px;top:80px;width:1px;height:20px;background:#ffffff;"></div>
<div style="left:598px;top:80px;width:1px;height:20px;background:#a0a0a0;"></div>
<div style="left:599px;top:80px;width:1px;height:20px;background:#ffffff;"></div>
<div style="left:742px;top:80px;width:1px;height:20px;background:#a0a0a0;"></div>
<div style="left:743px;top:80px;width:1px;height:20px;background:#ffffff;"></div>
<div style="left:771px;top:80px;width:1px;height:20px;background:#a0a0a0;"></div>
<div style="left:772px;top:80px;width:1px;height:20px;background:#ffffff;"></div>
<div style="left:800px;top:80px;width:1px;height:20px;background:#a0a0a0;"></div>
<div style="left:801px;top:80px;width:1px;height:20px;background:#ffffff;"></div>
<div style="left:852px;top:80px;width:1px;height:20px;background:#a0a0a0;"></div>
<div style="left:853px;top:80px;width:1px;height:20px;background:#ffffff;"></div>
<svg style="left:380px;top:81px" width="17" height="17" viewBox="0 0 17 17"><path d="M0.5 2.5h6l2 2h8v11h-14z" fill="#e8e8e8" stroke="#8a8a8a"/><rect x="1" y="9" width="14" height="3" fill="#d8d8d8"/><rect x="10" y="0" width="6" height="6" fill="#d0d0d0"/><circle cx="13" cy="3" r="1.5" fill="#fff"/></svg>
<svg style="left:404px;top:82px" width="17" height="17" viewBox="0 0 17 17"><path d="M0.5 3.5l3-3h6v14h-9z" fill="#f4f4f4" stroke="#8a8a8a"/><path d="M2 6.5h7M2 8.5h7M2 10.5h7M2 12.5h7" stroke="#777"/><path d="M11 0v6M8 3h6M9 1l4 4M13 1l-4 4" stroke="#d8d8d8"/></svg>
<svg style="left:427px;top:82px" width="17" height="17" viewBox="0 0 17 17"><path d="M1 1l13 12M13 1L2 13" stroke="#c4c4c4" stroke-width="1.4"/><path d="M1 1l3 3" stroke="#b0b0b0" stroke-width="2.2"/></svg>
<svg style="left:455px;top:81px" width="17" height="17" viewBox="0 0 17 17"><rect x="0.5" y="0.5" width="10" height="10" rx="1" fill="#f8f8f8" stroke="#999"/><rect x="4.5" y="4.5" width="11" height="11" fill="#f8f8f8" stroke="#888"/><text x="5" y="13.5" font-size="8.5" font-family="Liberation Sans" fill="#555">%</text></svg>
<svg style="left:478px;top:81px" width="17" height="17" viewBox="0 0 17 17"><path d="M0.5 3.5l3-3h8v15h-11z" fill="#f0f0f0" stroke="#888"/><path d="M2 6.5h8M2 8.5h8M2 10.5h8M2 12.5h8" stroke="#777"/></svg>
<svg style="left:500px;top:81px" width="17" height="17" viewBox="0 0 17 17"><path d="M2.5 3.5l3-3h8v15h-11z" fill="#eaeaea" stroke="#999"/><rect x="0" y="7" width="9" height="3" fill="#ddd" stroke="#aaa"/></svg>
<svg style="left:524px;top:82px" width="17" height="17" viewBox="0 0 17 17"><path d="M0.5 1.5h6l2 2h7v11h-15z" fill="#dcdcdc" stroke="#999"/></svg>
<svg style="left:547px;top:82px" width="17" height="17" viewBox="0 0 17 17"><path d="M0.5 1.5h6l2 2h7v11h-15z" fill="#dcdcdc" stroke="#999"/><rect x="3.5" y="5.5" width="9" height="7" fill="#f4f4f4" stroke="#888"/><path d="M10 7.5H6l2 2-2 2h4" stroke="#333" fill="none"/></svg>
<svg style="left:579px;top:82px" width="17" height="17" viewBox="0 0 17 17"><rect x="0" y="0" width="10" height="14" fill="#8a8a8a"/><rect x="1" y="1" width="8" height="2" fill="#777"/><rect x="1" y="3" width="8" height="10" fill="#d0d0d0"/><path d="M1 5.5h8M1 8h8M1 10.5h8M3.5 3v10M6 3v10" stroke="#999" stroke-width="0.8"/></svg>
<svg style="left:605px;top:81px" width="17" height="17" viewBox="0 0 17 17"><path d="M1 7l7-5 7 3-7 5z" fill="#d4d4d4" stroke="#b0b0b0"/><path d="M1 7v3l7 4 7-5v-3l-7 5z" fill="#ececec" stroke="#b4b4b4"/></svg>
<svg style="left:628px;top:81px" width="17" height="17" viewBox="0 0 17 17"><path d="M1 6l6-4 7 3-6 5z" fill="#e4e4e4" stroke="#c8c8c8"/><path d="M1 6v3l6 3" fill="none" stroke="#bbb"/><rect x="7.5" y="6.5" width="9" height="9" fill="#f4f4f4" stroke="#888"/><text x="9.5" y="14.5" font-size="8" fill="#666" font-family="Liberation Sans">F</text></svg>
<svg style="left:652px;top:82px" width="14" height="14" viewBox="0 0 14 14"><rect x="0" y="0" width="14" height="14" fill="#3a7a3a"/><rect x="1" y="1" width="12" height="12" fill="#f4fbf4"/><path d="M3 3L11 10M11 3L3 10" stroke="#2e9a3e" stroke-width="2.6"/><path d="M3 3L11 10" stroke="#a0e0a0" stroke-width="0.6"/><rect x="3" y="10" width="8" height="1" fill="#1a6a2a"/></svg>
<svg style="left:674px;top:81px" width="16" height="16" viewBox="0 0 16 16"><rect x="4" y="0" width="12" height="16" fill="#d8e8e8"/><rect x="5" y="1" width="10" height="14" fill="#ffffff"/><rect x="0" y="2" width="15" height="6" fill="#e80000"/><text x="1.3" y="7.2" font-size="5.6" font-weight="bold" fill="#fff" font-family="Liberation Sans" letter-spacing="0.3">PDF</text><path d="M5 15l3-5M8 15l3-5M11 14q1-5 4-4.5" stroke="#e80000" stroke-width="1.8" fill="none"/></svg>
<svg style="left:697px;top:81px" width="17" height="16" viewBox="0 0 17 16"><rect x="7.5" y="0.5" width="8" height="3" fill="#fff" stroke="#aaa" stroke-width="0.8"/><rect x="3.5" y="2" width="12.5" height="6.5" rx="0.8" fill="#0a6ae8"/><path d="M0 5l2-2.5 2 2.5-2 2.5z" fill="#10e090"/><text x="4.2" y="7.4" font-size="6.2" font-weight="bold" fill="#fff" font-family="Liberation Sans" letter-spacing="-0.2">XML</text><rect x="1.5" y="8.5" width="14" height="6.5" fill="#f4e4f4" stroke="#888" stroke-width="0.9"/><text x="2.3" y="14.6" font-size="7.2" font-weight="bold" fill="#000" font-family="Liberation Sans" letter-spacing="-0.3">ГГЭ</text></svg>
<svg style="left:720px;top:81px" width="17" height="16" viewBox="0 0 17 16"><rect x="7.5" y="0.5" width="8" height="3" fill="#ddd" stroke="#888" stroke-width="0.8"/><rect x="1" y="2" width="15" height="6.5" rx="0.8" fill="#4a4a4a"/><text x="4.2" y="7.4" font-size="6.2" font-weight="bold" fill="#fff" font-family="Liberation Sans" letter-spacing="-0.2">XML</text><rect x="1.5" y="8.5" width="14" height="6.5" fill="#202020" stroke="#666" stroke-width="0.9"/><text x="1.8" y="14.6" font-size="7.2" font-weight="bold" fill="#ddd" font-family="Liberation Sans" letter-spacing="-0.4">МГЭ</text></svg>
<svg style="left:749px;top:81px" width="17" height="17" viewBox="0 0 17 17"><path d="M1 7l7-5 7 3-7 5z" fill="#d4d4d4" stroke="#b0b0b0"/><path d="M1 7v3l7 4 7-5v-3l-7 5z" fill="#ececec" stroke="#b4b4b4"/></svg>
<svg style="left:778px;top:81px" width="17" height="17" viewBox="0 0 17 17"><rect x="0.5" y="0.5" width="10" height="10" rx="1" fill="#f8f8f8" stroke="#999"/><rect x="4.5" y="4.5" width="11" height="11" fill="#f8f8f8" stroke="#888"/><text x="5" y="13.5" font-size="8.5" font-family="Liberation Sans" fill="#555">%</text></svg>
<svg style="left:810px;top:83px" width="17" height="17" viewBox="0 0 17 17"><path d="M5 0l5 5H7v6H3V5H0z" fill="#8a8a8a"/></svg>
<svg style="left:833px;top:83px" width="17" height="17" viewBox="0 0 17 17"><path d="M5 11l5-5H7V0H3v6H0z" fill="#8a8a8a"/></svg>
<div class="t" style="left:860px;top:82.69px;font-size:11px;line-height:11px;color:#000;letter-spacing:-0.25px;">Вид ССР ЕРКР (ТСН-2001)</div>
<div style="left:325px;top:100px;width:1432px;height:1px;background:#ffffff;"></div>
<div style="left:2px;top:117px;width:320px;height:792px;background:#fff;border-top:1px solid #a0a0a0;box-sizing:border-box"></div>
<div style="left:321px;top:117px;width:1px;height:936px;background:#a0a0a0;"></div>
<div style="left:322px;top:100px;width:1px;height:952px;background:#f6f6f6;"></div>
<div style="left:30px;top:136px;width:1px;height:104px;background:repeating-linear-gradient(180deg,#808080 0 1px,transparent 1px 2px)"></div>
<div style="left:49px;top:168px;width:1px;height:24px;background:repeating-linear-gradient(180deg,#808080 0 1px,transparent 1px 2px)"></div>
<div style="left:49px;top:216px;width:1px;height:8px;background:repeating-linear-gradient(180deg,#808080 0 1px,transparent 1px 2px)"></div>
<div style="left:7px;top:123px;width:9px;height:9px;background:#fff;border:1px solid #808080;box-sizing:border-box"></div>
<div style="left:9px;top:127px;width:5px;height:1px;background:#000;"></div>
<div style="left:16px;top:127px;width:7px;height:1px;background:repeating-linear-gradient(90deg,#808080 0 1px,transparent 1px 2px)"></div>
<div style="left:24px;top:121px;width:11px;height:11px;background:#fff;border:1px solid #707070;box-sizing:border-box"></div>
<svg style="left:39px;top:120px" width="16" height="16" viewBox="0 0 16 16"><g shape-rendering="crispEdges"><rect x="5" y="0" width="1" height="3" fill="#333"/><path d="M6 0h3l2 1.2-2 1H6z" fill="#e80000"/><rect x="0.5" y="5" width="5.5" height="10.5" rx="1" fill="#1a70d8"/><rect x="5" y="3" width="6" height="12.5" rx="1" fill="#1a70d8"/><rect x="10" y="7" width="5.5" height="8.5" rx="1" fill="#1a70d8"/><rect x="2" y="7" width="3" height="1" fill="#c8e0ff"/><rect x="2" y="9" width="3" height="1" fill="#c8e0ff"/><rect x="2" y="11" width="3" height="1" fill="#c8e0ff"/><rect x="2" y="13" width="3" height="1" fill="#c8e0ff"/><rect x="6" y="5" width="4" height="1" fill="#c8e0ff"/><rect x="6" y="7" width="4" height="1" fill="#c8e0ff"/><rect x="6" y="9" width="4" height="1" fill="#c8e0ff"/><rect x="6" y="11" width="4" height="1" fill="#c8e0ff"/><rect x="6" y="13" width="4" height="1" fill="#c8e0ff"/><rect x="11" y="9" width="3" height="1" fill="#c8e0ff"/><rect x="11" y="11" width="3" height="1" fill="#c8e0ff"/><rect x="11" y="13" width="3" height="1" fill="#c8e0ff"/></g></svg>
<div style="left:0;top:0;width:320px;height:909px;overflow:hidden">
<div class="t" style="left:60px;top:121.69px;font-size:11px;line-height:11px;color:#000;">Здание спортивного комплекса</div>
</div>
<div style="left:26px;top:139px;width:9px;height:9px;background:#fff;border:1px solid #808080;box-sizing:border-box"></div>
<div style="left:28px;top:143px;width:5px;height:1px;background:#000;"></div>
<div style="left:30px;top:141px;width:1px;height:5px;background:#000;"></div>
<div style="left:35px;top:143px;width:7px;height:1px;background:repeating-linear-gradient(90deg,#808080 0 1px,transparent 1px 2px)"></div>
<div style="left:43px;top:137px;width:11px;height:11px;background:#fff;border:1px solid #707070;box-sizing:border-box"></div>
<svg style="left:57px;top:135px" width="16" height="16" viewBox="0 0 16 16"><g shape-rendering="crispEdges"><rect x="1" y="1" width="3" height="15" fill="#8a8a8a"/><rect x="2" y="3" width="1" height="2" fill="#fff"/><rect x="2" y="6" width="1" height="2" fill="#fff"/><rect x="2" y="9" width="1" height="2" fill="#fff"/><rect x="2" y="12" width="1" height="2" fill="#fff"/><rect x="0" y="1" width="12" height="1" fill="#808080"/><path d="M5 8l2-5h2l2 5z" fill="#a868f0"/><rect x="11" y="1" width="2.5" height="10" fill="#a868f0"/><path d="M5 8l4-6 4 6" stroke="#702030" stroke-width="0.8" fill="none"/><rect x="3" y="7" width="11" height="2" fill="#f08010"/><rect x="3" y="9" width="11" height="1" fill="#803020"/><rect x="7" y="10" width="3" height="6" fill="#2090f0"/><rect x="11" y="10" width="4" height="6" fill="#2090f0"/><rect x="8" y="11" width="1" height="1" fill="#fff"/><rect x="12" y="11" width="1" height="1" fill="#fff"/><rect x="8" y="13" width="1" height="1" fill="#fff"/><rect x="12" y="13" width="1" height="1" fill="#fff"/></g></svg>
<div style="left:0;top:0;width:320px;height:909px;overflow:hidden">
<div class="t" style="left:79px;top:137.69px;font-size:11px;line-height:11px;color:#000;">Объекты подсобного и обслуживающего назна</div>
</div>
<div style="left:26px;top:155px;width:9px;height:9px;background:#fff;border:1px solid #808080;box-sizing:border-box"></div>
<div style="left:28px;top:159px;width:5px;height:1px;background:#000;"></div>
<div style="left:35px;top:159px;width:7px;height:1px;background:repeating-linear-gradient(90deg,#808080 0 1px,transparent 1px 2px)"></div>
<div style="left:43px;top:153px;width:11px;height:11px;background:#fff;border:1px solid #707070;box-sizing:border-box"></div>
<svg style="left:57px;top:151px" width="16" height="16" viewBox="0 0 16 16"><g shape-rendering="crispEdges"><rect x="1" y="1" width="3" height="15" fill="#8a8a8a"/><rect x="2" y="3" width="1" height="2" fill="#fff"/><rect x="2" y="6" width="1" height="2" fill="#fff"/><rect x="2" y="9" width="1" height="2" fill="#fff"/><rect x="2" y="12" width="1" height="2" fill="#fff"/><rect x="0" y="1" width="12" height="1" fill="#808080"/><path d="M5 8l2-5h2l2 5z" fill="#a868f0"/><rect x="11" y="1" width="2.5" height="10" fill="#a868f0"/><path d="M5 8l4-6 4 6" stroke="#702030" stroke-width="0.8" fill="none"/><rect x="3" y="7" width="11" height="2" fill="#f08010"/><rect x="3" y="9" width="11" height="1" fill="#803020"/><rect x="7" y="10" width="3" height="6" fill="#2090f0"/><rect x="11" y="10" width="4" height="6" fill="#2090f0"/><rect x="8" y="11" width="1" height="1" fill="#fff"/><rect x="12" y="11" width="1" height="1" fill="#fff"/><rect x="8" y="13" width="1" height="1" fill="#fff"/><rect x="12" y="13" width="1" height="1" fill="#fff"/></g></svg>
<div style="left:0;top:0;width:320px;height:909px;overflow:hidden">
<div class="t" style="left:79px;top:153.69px;font-size:11px;line-height:11px;color:#000;">Основные объекты строительства</div>
</div>
<div style="left:50px;top:175px;width:11px;height:1px;background:repeating-linear-gradient(90deg,#808080 0 1px,transparent 1px 2px)"></div>
<div style="left:62px;top:169px;width:11px;height:11px;background:#fff;border:1px solid #707070;box-sizing:border-box"></div>
<svg style="left:76px;top:167px" width="17" height="16" viewBox="0 0 17 16"><path d="M0 8.5l10 4.5 6-8v3l-6 8-10-4.5z" fill="#dfe3ea" stroke="#b8bcc8" stroke-width="0.6"/><path d="M5 0l11 4.5-6 8.5L0 8.5z" fill="#3a9a5a"/><path d="M5 0l11 4.5-1.5 2L4 2z" fill="#2a8040"/><path d="M7.5 4l5.5 2" stroke="#e8f8e8" stroke-width="1.3"/></svg>
<div style="left:0;top:0;width:320px;height:909px;overflow:hidden">
<div class="t" style="left:97.5px;top:169.69px;font-size:11px;line-height:11px;color:#000;">Устройство котлована</div>
</div>
<div style="left:50px;top:191px;width:11px;height:1px;background:repeating-linear-gradient(90deg,#808080 0 1px,transparent 1px 2px)"></div>
<div style="left:62px;top:185px;width:11px;height:11px;background:#fff;border:1px solid #707070;box-sizing:border-box"></div>
<svg style="left:76px;top:183px" width="17" height="16" viewBox="0 0 17 16"><path d="M0 8.5l10 4.5 6-8v3l-6 8-10-4.5z" fill="#dfe3ea" stroke="#b8bcc8" stroke-width="0.6"/><path d="M5 0l11 4.5-6 8.5L0 8.5z" fill="#3a9a5a"/><path d="M5 0l11 4.5-1.5 2L4 2z" fill="#2a8040"/><path d="M7.5 4l5.5 2" stroke="#e8f8e8" stroke-width="1.3"/></svg>
<div style="left:0;top:0;width:320px;height:909px;overflow:hidden">
<div class="t" style="left:97.5px;top:185.69px;font-size:11px;line-height:11px;color:#000;">Фундамент</div>
</div>
<div style="left:26px;top:203px;width:9px;height:9px;background:#fff;border:1px solid #808080;box-sizing:border-box"></div>
<div style="left:28px;top:207px;width:5px;height:1px;background:#000;"></div>
<div style="left:35px;top:207px;width:7px;height:1px;background:repeating-linear-gradient(90deg,#808080 0 1px,transparent 1px 2px)"></div>
<div style="left:43px;top:201px;width:11px;height:11px;background:#fff;border:1px solid #707070;box-sizing:border-box"></div>
<svg style="left:57px;top:199px" width="16" height="16" viewBox="0 0 16 16"><g shape-rendering="crispEdges"><rect x="1" y="1" width="3" height="15" fill="#8a8a8a"/><rect x="2" y="3" width="1" height="2" fill="#fff"/><rect x="2" y="6" width="1" height="2" fill="#fff"/><rect x="2" y="9" width="1" height="2" fill="#fff"/><rect x="2" y="12" width="1" height="2" fill="#fff"/><rect x="0" y="1" width="12" height="1" fill="#808080"/><path d="M5 8l2-5h2l2 5z" fill="#a868f0"/><rect x="11" y="1" width="2.5" height="10" fill="#a868f0"/><path d="M5 8l4-6 4 6" stroke="#702030" stroke-width="0.8" fill="none"/><rect x="3" y="7" width="11" height="2" fill="#f08010"/><rect x="3" y="9" width="11" height="1" fill="#803020"/><rect x="7" y="10" width="3" height="6" fill="#2090f0"/><rect x="11" y="10" width="4" height="6" fill="#2090f0"/><rect x="8" y="11" width="1" height="1" fill="#fff"/><rect x="12" y="11" width="1" height="1" fill="#fff"/><rect x="8" y="13" width="1" height="1" fill="#fff"/><rect x="12" y="13" width="1" height="1" fill="#fff"/></g></svg>
<div style="left:0;top:0;width:320px;height:909px;overflow:hidden">
<div class="t" style="left:79px;top:201.69px;font-size:11px;line-height:11px;color:#000;">Подготовка территории строительства</div>
</div>
<div style="left:50px;top:223px;width:11px;height:1px;background:repeating-linear-gradient(90deg,#808080 0 1px,transparent 1px 2px)"></div>
<div style="left:62px;top:217px;width:11px;height:11px;background:#fff;border:1px solid #707070;box-sizing:border-box"></div>
<svg style="left:76px;top:215px" width="17" height="16" viewBox="0 0 17 16"><path d="M0 8.5l10 4.5 6-8v3l-6 8-10-4.5z" fill="#dfe3ea" stroke="#b8bcc8" stroke-width="0.6"/><path d="M5 0l11 4.5-6 8.5L0 8.5z" fill="#3a9a5a"/><path d="M5 0l11 4.5-1.5 2L4 2z" fill="#2a8040"/><path d="M7.5 4l5.5 2" stroke="#e8f8e8" stroke-width="1.3"/></svg>
<div style="left:95px;top:215px;width:181px;height:16px;background:#0078d7;"></div>
<div class="t" style="left:97px;top:217.69px;font-size:11px;line-height:11px;color:#fff;">Подготовительные работы (смета)</div>
<div style="left:26px;top:235px;width:9px;height:9px;background:#fff;border:1px solid #808080;box-sizing:border-box"></div>
<div style="left:28px;top:239px;width:5px;height:1px;background:#000;"></div>
<div style="left:30px;top:237px;width:1px;height:5px;background:#000;"></div>
<div style="left:35px;top:239px;width:7px;height:1px;background:repeating-linear-gradient(90deg,#808080 0 1px,transparent 1px 2px)"></div>
<div style="left:43px;top:233px;width:11px;height:11px;background:#fff;border:1px solid #707070;box-sizing:border-box"></div>
<svg style="left:57px;top:231px" width="16" height="16" viewBox="0 0 16 16"><g shape-rendering="crispEdges"><rect x="1" y="1" width="3" height="15" fill="#8a8a8a"/><rect x="2" y="3" width="1" height="2" fill="#fff"/><rect x="2" y="6" width="1" height="2" fill="#fff"/><rect x="2" y="9" width="1" height="2" fill="#fff"/><rect x="2" y="12" width="1" height="2" fill="#fff"/><rect x="0" y="1" width="12" height="1" fill="#808080"/><path d="M5 8l2-5h2l2 5z" fill="#a868f0"/><rect x="11" y="1" width="2.5" height="10" fill="#a868f0"/><path d="M5 8l4-6 4 6" stroke="#702030" stroke-width="0.8" fill="none"/><rect x="3" y="7" width="11" height="2" fill="#f08010"/><rect x="3" y="9" width="11" height="1" fill="#803020"/><rect x="7" y="10" width="3" height="6" fill="#2090f0"/><rect x="11" y="10" width="4" height="6" fill="#2090f0"/><rect x="8" y="11" width="1" height="1" fill="#fff"/><rect x="12" y="11" width="1" height="1" fill="#fff"/><rect x="8" y="13" width="1" height="1" fill="#fff"/><rect x="12" y="13" width="1" height="1" fill="#fff"/></g></svg>
<div style="left:0;top:0;width:320px;height:909px;overflow:hidden">
<div class="t" style="left:79px;top:233.69px;font-size:11px;line-height:11px;color:#000;">Строительство школы</div>
</div>
<div style="left:2px;top:909px;width:319px;height:16px;background:#f0f0f0;"></div>
<div style="left:20px;top:910px;width:258px;height:14px;background:#cdcdcd;"></div>
<svg style="left:4px;top:911px" width="12" height="12" viewBox="0 0 12 12"><path d="M9.5 2h-2L3 6l4.5 4h2L5 6z" fill="#606060"/></svg>
<svg style="left:306px;top:911px" width="12" height="12" viewBox="0 0 12 12"><path d="M2.5 2h2L9 6l-4.5 4h-2L7 6z" fill="#606060"/></svg>
<div style="left:2px;top:926px;width:320px;height:1px;background:#a0a0a0;"></div>
<div style="left:2px;top:927px;width:320px;height:1px;background:#ffffff;"></div>
<div style="left:2px;top:928px;width:318px;height:1px;background:#a0a0a0;"></div>
<div style="left:2px;top:929px;width:318px;height:1px;background:#ffffff;"></div>
<div class="t" style="left:8px;top:935.69px;font-size:11px;line-height:11px;color:#000;">Всего элементов в проекте: 9</div>
<div class="t" style="left:8px;top:953.69px;font-size:11px;line-height:11px;color:#000;">Осталось перенести в главы сводного расчёта: 6</div>
<svg style="left:8px;top:976px" width="14" height="14" viewBox="0 0 14 14"><defs><linearGradient id="ggup" x1="0" y1="0" x2="0" y2="1"><stop offset="0" stop-color="#50d070"/><stop offset="1" stop-color="#208040"/></linearGradient></defs><rect x="0.5" y="0.5" width="13" height="13" rx="1.5" fill="url(#ggup)" stroke="#404840"/><path d="M7 2.5l4.5 4.5H9v4.5H5V7H2.5z" fill="#fff"/></svg>
<svg style="left:30px;top:976px" width="14" height="14" viewBox="0 0 14 14"><defs><linearGradient id="ggdown" x1="0" y1="0" x2="0" y2="1"><stop offset="0" stop-color="#50d070"/><stop offset="1" stop-color="#208040"/></linearGradient></defs><rect x="0.5" y="0.5" width="13" height="13" rx="1.5" fill="url(#ggdown)" stroke="#404840"/><path d="M7 11.5l4.5-4.5H9V2.5H5V7H2.5z" fill="#fff"/></svg>
<svg style="left:59px;top:976px" width="14" height="14" viewBox="0 0 14 14"><rect x="0.5" y="0.5" width="13" height="13" rx="1" fill="#12a020" stroke="#404840"/><text x="2" y="10.5" font-size="9" font-weight="bold" fill="#fff" font-family="Liberation Sans">N</text><circle cx="10.3" cy="4.8" r="1.5" fill="none" stroke="#fff" stroke-width="1"/><rect x="8.8" y="7.5" width="3" height="1" fill="#fff"/></svg>
<div style="left:85px;top:971px;width:229px;height:24px;background:#f0f0f0;border-top:1px solid #fff;border-left:1px solid #fff;border-right:1px solid #696969;border-bottom:1px solid #696969;box-sizing:border-box;box-shadow:inset -1px -1px 0 #a0a0a0"></div>
<div class="t" style="left:85px;top:978.69px;font-size:11px;line-height:11px;color:#000;width:229px;text-align:center;">Перенести сметы в ССР</div>
<div style="left:2px;top:1000px;width:319px;height:1px;background:#a0a0a0;"></div>
<div style="left:2px;top:1001px;width:319px;height:1px;background:#ffffff;"></div>
<div class="t" style="left:8px;top:1006.69px;font-size:11px;line-height:11px;color:#000;">Вносить элементы в сводный расчёт до</div>
<div style="left:7px;top:1022px;width:307px;height:20px;background:#fff;border-top:1px solid #a0a0a0;border-left:1px solid #a0a0a0;border-bottom:1px solid #fff;border-right:1px solid #fff;box-sizing:border-box"></div>
<div style="left:298px;top:1024px;width:15px;height:17px;background:#f0f0f0;border-top:1px solid #fff;border-left:1px solid #fff;border-right:1px solid #a0a0a0;border-bottom:1px solid #a0a0a0;box-sizing:border-box"></div>
<svg style="left:301px;top:1029px" width="9" height="6" viewBox="0 0 9 6"><path d="M0 0h9L4.5 5z" fill="#000"/></svg>
<svg style="left:11px;top:1025px" width="17" height="16" viewBox="0 0 17 16"><path d="M0 9l10 4.5 6-8v2.5l-6 8L0 11.5z" fill="#e0e4ea" stroke="#a8acb8" stroke-width="0.6"/><path d="M5 0l12 4.5-7 9L0 9z" fill="#34d458"/><path d="M5 0l12 4.5-1.5 2L4 2z" fill="#20b040"/><path d="M8 4l5 2" stroke="#c0f0c8" stroke-width="1.2"/></svg>
<div class="t" style="left:30px;top:1027.69px;font-size:11px;line-height:11px;color:#000;">Локальных смет</div>
<div style="left:2px;top:1052px;width:320px;height:1px;background:#a0a0a0;"></div>
<div style="left:2px;top:1053px;width:1755px;height:1px;background:#ffffff;"></div>
<div style="left:325px;top:100px;width:1px;height:932px;background:#ffffff;"></div>
<div style="left:326px;top:101px;width:1px;height:931px;background:#e3e3e3;"></div>
<div style="left:326px;top:101px;width:1430px;height:1px;background:#e3e3e3;"></div>
<div style="left:329px;top:104px;width:1425px;height:864px;background:#fff;border-left:1px solid #a0a0a0;border-top:1px solid #a0a0a0;box-sizing:border-box"></div>
<div style="left:330px;top:105px;width:1px;height:1px;background:#fff;"></div>
<div style="left:330px;top:105px;width:861px;height:71px;background:#f0f0f0;"></div>
<div style="left:330px;top:104px;width:861px;height:1px;background:#808080;"></div>
<div style="left:341px;top:105px;width:1px;height:183px;background:#808080;"></div>
<div style="left:586px;top:105px;width:1px;height:71px;background:#808080;"></div>
<div style="left:586px;top:127px;width:604px;height:1px;background:#808080;"></div>
<div style="left:737px;top:127px;width:1px;height:49px;background:#808080;"></div>
<div style="left:888px;top:127px;width:1px;height:49px;background:#808080;"></div>
<div style="left:1039px;top:127px;width:1px;height:49px;background:#808080;"></div>
<div style="left:1190px;top:105px;width:1px;height:71px;background:#808080;"></div>
<div style="left:330px;top:176px;width:861px;height:1px;background:#808080;"></div>
<div style="left:331px;top:105px;width:1px;height:71px;background:#ffffff;"></div>
<div style="left:342px;top:105px;width:1px;height:71px;background:#ffffff;"></div>
<div style="left:587px;top:105px;width:1px;height:22px;background:#ffffff;"></div>
<div style="left:587px;top:105px;width:603px;height:1px;background:#ffffff;"></div>
<div style="left:587px;top:128px;width:1px;height:48px;background:#ffffff;"></div>
<div style="left:738px;top:128px;width:1px;height:48px;background:#ffffff;"></div>
<div style="left:889px;top:128px;width:1px;height:48px;background:#ffffff;"></div>
<div style="left:1040px;top:128px;width:1px;height:48px;background:#ffffff;"></div>
<div style="left:342px;top:175px;width:244px;height:1px;background:#ffffff;"></div>
<div class="t" style="left:341px;top:111.69px;font-size:11px;line-height:11px;color:#000;width:849px;text-align:center;left:586px;width:604px;">Сметная стоимость, тыс.руб.</div>
<div class="t" style="left:342px;top:135.69px;font-size:11px;line-height:11px;color:#000;width:244px;text-align:center;">Наименование затрат</div>
<div class="t" style="left:587px;top:134.69px;font-size:11px;line-height:11px;color:#000;width:150px;text-align:center;">объектов</div>
<div class="t" style="left:587px;top:147.69px;font-size:11px;line-height:11px;color:#000;width:150px;text-align:center;">производственного</div>
<div class="t" style="left:587px;top:160.69px;font-size:11px;line-height:11px;color:#000;width:150px;text-align:center;">назначения</div>
<div class="t" style="left:738px;top:134.69px;font-size:11px;line-height:11px;color:#000;width:150px;text-align:center;">объектов</div>
<div class="t" style="left:738px;top:147.69px;font-size:11px;line-height:11px;color:#000;width:150px;text-align:center;">непроизводственного</div>
<div class="t" style="left:738px;top:160.69px;font-size:11px;line-height:11px;color:#000;width:150px;text-align:center;">назначения</div>
<div class="t" style="left:889px;top:147.69px;font-size:11px;line-height:11px;color:#000;width:150px;text-align:center;">всего</div>
<div class="t" style="left:1040px;top:147.69px;font-size:11px;line-height:11px;color:#000;width:150px;text-align:center;">в ССР</div>
<div style="left:330px;top:177px;width:11px;height:15px;background:#f0f0f0;"></div>
<div style="left:331px;top:177px;width:1px;height:15px;background:#ffffff;"></div>
<div style="left:330px;top:192px;width:12px;height:1px;background:#808080;"></div>
<div style="left:342px;top:192px;width:849px;height:1px;background:#c0c0c0;"></div>
<div style="left:586px;top:177px;width:1px;height:15px;background:#c0c0c0;"></div>
<div style="left:737px;top:177px;width:1px;height:15px;background:#c0c0c0;"></div>
<div style="left:888px;top:177px;width:1px;height:15px;background:#c0c0c0;"></div>
<div style="left:1039px;top:177px;width:1px;height:15px;background:#c0c0c0;"></div>
<div style="left:1190px;top:177px;width:1px;height:15px;background:#c0c0c0;"></div>
<div class="t" style="left:345px;top:179.69px;font-size:11px;line-height:11px;color:#000;font-weight:bold;letter-spacing:0.62px;">Сметная стоимость:</div>
<div class="t" style="left:587px;top:179.69px;font-size:11px;line-height:11px;color:#000;width:147px;text-align:right;">0,00</div>
<div class="t" style="left:738px;top:179.69px;font-size:11px;line-height:11px;color:#000;width:147px;text-align:right;">31 754,03</div>
<div class="t" style="left:889px;top:179.69px;font-size:11px;line-height:11px;color:#000;width:147px;text-align:right;">31 754,03</div>
<div class="t" style="left:1040px;top:179.69px;font-size:11px;line-height:11px;color:#000;width:147px;text-align:right;">31 754,03</div>
<div style="left:330px;top:193px;width:11px;height:15px;background:#f0f0f0;"></div>
<div style="left:331px;top:193px;width:1px;height:15px;background:#ffffff;"></div>
<div style="left:330px;top:208px;width:12px;height:1px;background:#808080;"></div>
<div style="left:342px;top:208px;width:849px;height:1px;background:#c0c0c0;"></div>
<div style="left:586px;top:193px;width:1px;height:15px;background:#c0c0c0;"></div>
<div style="left:737px;top:193px;width:1px;height:15px;background:#c0c0c0;"></div>
<div style="left:888px;top:193px;width:1px;height:15px;background:#c0c0c0;"></div>
<div style="left:1039px;top:193px;width:1px;height:15px;background:#c0c0c0;"></div>
<div style="left:1190px;top:193px;width:1px;height:15px;background:#c0c0c0;"></div>
<div class="t" style="left:356px;top:195.69px;font-size:11px;line-height:11px;color:#000;">строительных и монтажных работ</div>
<div class="t" style="left:587px;top:195.69px;font-size:11px;line-height:11px;color:#000;width:147px;text-align:right;">0,00</div>
<div class="t" style="left:738px;top:195.69px;font-size:11px;line-height:11px;color:#000;width:147px;text-align:right;">31 690,65</div>
<div class="t" style="left:889px;top:195.69px;font-size:11px;line-height:11px;color:#000;width:147px;text-align:right;">31 690,65</div>
<div class="t" style="left:1040px;top:195.69px;font-size:11px;line-height:11px;color:#000;width:147px;text-align:right;">31 690,65</div>
<div style="left:330px;top:209px;width:11px;height:15px;background:#f0f0f0;"></div>
<div style="left:331px;top:209px;width:1px;height:15px;background:#ffffff;"></div>
<div style="left:330px;top:224px;width:12px;height:1px;background:#808080;"></div>
<div style="left:342px;top:224px;width:849px;height:1px;background:#c0c0c0;"></div>
<div style="left:586px;top:209px;width:1px;height:15px;background:#c0c0c0;"></div>
<div style="left:737px;top:209px;width:1px;height:15px;background:#c0c0c0;"></div>
<div style="left:888px;top:209px;width:1px;height:15px;background:#c0c0c0;"></div>
<div style="left:1039px;top:209px;width:1px;height:15px;background:#c0c0c0;"></div>
<div style="left:1190px;top:209px;width:1px;height:15px;background:#c0c0c0;"></div>
<div class="t" style="left:356px;top:211.69px;font-size:11px;line-height:11px;color:#000;">оборудования</div>
<div class="t" style="left:587px;top:211.69px;font-size:11px;line-height:11px;color:#000;width:147px;text-align:right;">0,00</div>
<div class="t" style="left:738px;top:211.69px;font-size:11px;line-height:11px;color:#000;width:147px;text-align:right;">0,00</div>
<div class="t" style="left:889px;top:211.69px;font-size:11px;line-height:11px;color:#000;width:147px;text-align:right;">0,00</div>
<div class="t" style="left:1040px;top:211.69px;font-size:11px;line-height:11px;color:#000;width:147px;text-align:right;">0,00</div>
<div style="left:330px;top:225px;width:11px;height:15px;background:#f0f0f0;"></div>
<div style="left:331px;top:225px;width:1px;height:15px;background:#ffffff;"></div>
<div style="left:330px;top:240px;width:12px;height:1px;background:#808080;"></div>
<div style="left:342px;top:240px;width:849px;height:1px;background:#c0c0c0;"></div>
<div style="left:586px;top:225px;width:1px;height:15px;background:#c0c0c0;"></div>
<div style="left:737px;top:225px;width:1px;height:15px;background:#c0c0c0;"></div>
<div style="left:888px;top:225px;width:1px;height:15px;background:#c0c0c0;"></div>
<div style="left:1039px;top:225px;width:1px;height:15px;background:#c0c0c0;"></div>
<div style="left:1190px;top:225px;width:1px;height:15px;background:#c0c0c0;"></div>
<div class="t" style="left:356px;top:227.69px;font-size:11px;line-height:11px;color:#000;">прочих работ</div>
<div class="t" style="left:587px;top:227.69px;font-size:11px;line-height:11px;color:#000;width:147px;text-align:right;">0,00</div>
<div class="t" style="left:738px;top:227.69px;font-size:11px;line-height:11px;color:#000;width:147px;text-align:right;">63,38</div>
<div class="t" style="left:889px;top:227.69px;font-size:11px;line-height:11px;color:#000;width:147px;text-align:right;">63,38</div>
<div class="t" style="left:1040px;top:227.69px;font-size:11px;line-height:11px;color:#000;width:147px;text-align:right;">63,38</div>
<div style="left:330px;top:241px;width:11px;height:15px;background:#f0f0f0;"></div>
<div style="left:331px;top:241px;width:1px;height:15px;background:#ffffff;"></div>
<div style="left:330px;top:256px;width:12px;height:1px;background:#808080;"></div>
<div style="left:342px;top:256px;width:849px;height:1px;background:#c0c0c0;"></div>
<div style="left:586px;top:241px;width:1px;height:15px;background:#c0c0c0;"></div>
<div style="left:737px;top:241px;width:1px;height:15px;background:#c0c0c0;"></div>
<div style="left:888px;top:241px;width:1px;height:15px;background:#c0c0c0;"></div>
<div style="left:1039px;top:241px;width:1px;height:15px;background:#c0c0c0;"></div>
<div style="left:1190px;top:241px;width:1px;height:15px;background:#c0c0c0;"></div>
<div class="t" style="left:345px;top:243.69px;font-size:11px;line-height:11px;color:#000;font-weight:bold;letter-spacing:0.62px;">Сметная стоимость всего, в том числе</div>
<div class="t" style="left:587px;top:243.69px;font-size:11px;line-height:11px;color:#000;width:147px;text-align:right;">0,00</div>
<div class="t" style="left:738px;top:243.69px;font-size:11px;line-height:11px;color:#000;width:147px;text-align:right;">31 754,03</div>
<div class="t" style="left:889px;top:243.69px;font-size:11px;line-height:11px;color:#000;width:147px;text-align:right;">31 754,03</div>
<div class="t" style="left:1040px;top:243.69px;font-size:11px;line-height:11px;color:#000;width:147px;text-align:right;">31 754,03</div>
<div style="left:330px;top:257px;width:11px;height:15px;background:#f0f0f0;"></div>
<div style="left:331px;top:257px;width:1px;height:15px;background:#ffffff;"></div>
<div style="left:330px;top:272px;width:12px;height:1px;background:#808080;"></div>
<div style="left:342px;top:272px;width:849px;height:1px;background:#c0c0c0;"></div>
<div style="left:586px;top:257px;width:1px;height:15px;background:#c0c0c0;"></div>
<div style="left:737px;top:257px;width:1px;height:15px;background:#c0c0c0;"></div>
<div style="left:888px;top:257px;width:1px;height:15px;background:#c0c0c0;"></div>
<div style="left:1039px;top:257px;width:1px;height:15px;background:#c0c0c0;"></div>
<div style="left:1190px;top:257px;width:1px;height:15px;background:#c0c0c0;"></div>
<div class="t" style="left:356px;top:259.69px;font-size:11px;line-height:11px;color:#000;">возвратных сумм</div>
<div class="t" style="left:587px;top:259.69px;font-size:11px;line-height:11px;color:#000;width:147px;text-align:right;">0,00</div>
<div class="t" style="left:738px;top:259.69px;font-size:11px;line-height:11px;color:#000;width:147px;text-align:right;">0,00</div>
<div class="t" style="left:889px;top:259.69px;font-size:11px;line-height:11px;color:#000;width:147px;text-align:right;">0,00</div>
<div class="t" style="left:1040px;top:259.69px;font-size:11px;line-height:11px;color:#000;width:147px;text-align:right;">0,00</div>
<div style="left:330px;top:273px;width:11px;height:15px;background:#f0f0f0;"></div>
<div style="left:331px;top:273px;width:1px;height:15px;background:#ffffff;"></div>
<div style="left:330px;top:288px;width:12px;height:1px;background:#808080;"></div>
<div style="left:342px;top:288px;width:849px;height:1px;background:#c0c0c0;"></div>
<div style="left:586px;top:273px;width:1px;height:15px;background:#c0c0c0;"></div>
<div style="left:737px;top:273px;width:1px;height:15px;background:#c0c0c0;"></div>
<div style="left:888px;top:273px;width:1px;height:15px;background:#c0c0c0;"></div>
<div style="left:1039px;top:273px;width:1px;height:15px;background:#c0c0c0;"></div>
<div style="left:1190px;top:273px;width:1px;height:15px;background:#c0c0c0;"></div>
<div style="left:342px;top:273px;width:244px;height:15px;background:#0078d7;outline:1px dotted #c08020;outline-offset:-1px"></div>
<div class="t" style="left:356px;top:275.69px;font-size:11px;line-height:11px;color:#fff;">НДС</div>
<svg style="left:333px;top:275px" width="6" height="11" viewBox="0 0 6 11"><path d="M0 0l6 5.5L0 11z" fill="#000"/></svg>
<div class="t" style="left:587px;top:275.69px;font-size:11px;line-height:11px;color:#000;width:147px;text-align:right;">0,00</div>
<div class="t" style="left:738px;top:275.69px;font-size:11px;line-height:11px;color:#000;width:147px;text-align:right;">26 461,70</div>
<div class="t" style="left:889px;top:275.69px;font-size:11px;line-height:11px;color:#000;width:147px;text-align:right;">26 461,70</div>
<div class="t" style="left:1040px;top:275.69px;font-size:11px;line-height:11px;color:#000;width:147px;text-align:right;">26 461,70</div>
<div style="left:1737px;top:105px;width:16px;height:862px;background:#f0f0f0;"></div>
<div style="left:1737px;top:504px;width:16px;height:446px;background:#cdcdcd;"></div>
<svg style="left:1739px;top:108px" width="12" height="12" viewBox="0 0 12 12"><path d="M2 9.5V7.5L6 3l4 4.5v2L6 5z" fill="#606060"/></svg>
<svg style="left:1739px;top:952px" width="12" height="12" viewBox="0 0 12 12"><path d="M2 2.5v2L6 9l4-4.5v-2L6 7z" fill="#606060"/></svg>
<div style="left:1753px;top:100px;width:1px;height:868px;background:#ffffff;"></div>
<div style="left:329px;top:968px;width:47px;height:21px;background:repeating-conic-gradient(#fafafa 0 25%, #ececec 0 50%) 0 0/2px 2px;border-left:1px solid #a0a0a0;border-top:1px solid #a0a0a0;box-sizing:border-box"></div>
<div class="t" style="left:336px;top:975.69px;font-size:11px;line-height:11px;color:#000;">5 граф</div>
<div class="t" style="left:380px;top:975.69px;font-size:11px;line-height:11px;color:#000;">15 граф</div>
<div style="left:329px;top:997px;width:1424px;height:1px;background:#a0a0a0;"></div>
<div style="left:329px;top:998px;width:1424px;height:1px;background:#ffffff;"></div>
<div style="left:329px;top:1001px;width:75px;height:20px;background:repeating-conic-gradient(#fafafa 0 25%, #ececec 0 50%) 0 0/2px 2px;border-left:1px solid #a0a0a0;border-top:1px solid #a0a0a0;box-sizing:border-box"></div>
<div class="t" style="left:334px;top:1008.69px;font-size:11px;line-height:11px;color:#000;">2000, Январь</div>
<div class="t" style="left:414px;top:1008.69px;font-size:11px;line-height:11px;color:#000;">2025, Март</div>
<div style="left:325px;top:1031px;width:1432px;height:1px;background:#808080;"></div>
<div style="left:325px;top:1032px;width:1432px;height:1px;background:#a0a0a0;"></div>
<div style="left:329px;top:1032px;width:39px;height:19px;background:#f0f0f0;border-left:1px solid #fff;border-right:1px solid #a0a0a0;border-bottom:2px solid #808080;box-sizing:border-box"></div>
<div class="t" style="left:334px;top:1036.69px;font-size:11px;line-height:11px;color:#000;">ССР</div>
<div style="left:369px;top:1031px;width:87px;height:22px;background:#f0f0f0;border-left:1px solid #fff;border-right:1px solid #696969;border-bottom:2px solid #808080;box-sizing:border-box"></div>
<div class="t" style="left:376px;top:1038.69px;font-size:11px;line-height:11px;color:#000;">Сводка затрат</div>
<div style="left:456px;top:1032px;width:86px;height:19px;background:#f0f0f0;border-left:2px solid #a0a0a0;border-right:1px solid #696969;border-bottom:2px solid #808080;box-sizing:border-box;box-shadow:inset 1px 0 0 #fff"></div>
<div class="t" style="left:462px;top:1036.69px;font-size:11px;line-height:11px;color:#000;">Предпросмотр</div>
<div style="left:2px;top:1054px;width:1755px;height:1px;background:#a0a0a0;"></div>
<div style="left:2px;top:1054px;width:1px;height:40px;background:#a0a0a0;"></div>
<div style="left:2px;top:1093px;width:1755px;height:1px;background:#ffffff;"></div>
<div style="left:2px;top:1094px;width:1755px;height:1px;background:#a0a0a0;"></div>
<div style="left:2px;top:1095px;width:1755px;height:1px;background:#ffffff;"></div>
<div style="left:1635px;top:1063px;width:113px;height:22px;background:#f0f0f0;border-top:1px solid #fff;border-left:1px solid #fff;border-right:1px solid #696969;border-bottom:1px solid #696969;box-sizing:border-box;box-shadow:inset -1px -1px 0 #a0a0a0"></div>
<div class="t" style="left:1635px;top:1068.69px;font-size:11px;line-height:11px;color:#000;width:113px;text-align:center;">Закрыть</div>
<div style="left:4px;top:1098px;width:84px;height:1px;background:#a0a0a0;"></div>
<div style="left:4px;top:1098px;width:1px;height:26px;background:#a0a0a0;"></div>
<div style="left:4px;top:1123px;width:85px;height:1px;background:#ffffff;"></div>
<div style="left:88px;top:1098px;width:1px;height:26px;background:#ffffff;"></div>
<div style="left:93px;top:1098px;width:295px;height:1px;background:#a0a0a0;"></div>
<div style="left:93px;top:1098px;width:1px;height:26px;background:#a0a0a0;"></div>
<div style="left:93px;top:1123px;width:296px;height:1px;background:#ffffff;"></div>
<div style="left:388px;top:1098px;width:1px;height:26px;background:#ffffff;"></div>
<div style="left:393px;top:1098px;width:1293px;height:1px;background:#a0a0a0;"></div>
<div style="left:393px;top:1098px;width:1px;height:26px;background:#a0a0a0;"></div>
<div style="left:393px;top:1123px;width:1294px;height:1px;background:#ffffff;"></div>
<div style="left:1686px;top:1098px;width:1px;height:26px;background:#ffffff;"></div>
<div style="left:1691px;top:1098px;width:29px;height:1px;background:#a0a0a0;"></div>
<div style="left:1691px;top:1098px;width:1px;height:26px;background:#a0a0a0;"></div>
<div style="left:1691px;top:1123px;width:30px;height:1px;background:#ffffff;"></div>
<div style="left:1720px;top:1098px;width:1px;height:26px;background:#ffffff;"></div>
<div style="left:1725px;top:1098px;width:29px;height:1px;background:#a0a0a0;"></div>
<div style="left:1725px;top:1098px;width:1px;height:26px;background:#a0a0a0;"></div>
<div style="left:1725px;top:1123px;width:30px;height:1px;background:#ffffff;"></div>
<div style="left:1754px;top:1098px;width:1px;height:26px;background:#ffffff;"></div>
<div style="left:90px;top:1097px;width:1px;height:28px;background:#a0a0a0;"></div>
<div style="left:91px;top:1097px;width:1px;height:28px;background:#ffffff;"></div>
<div style="left:390px;top:1097px;width:1px;height:28px;background:#a0a0a0;"></div>
<div style="left:391px;top:1097px;width:1px;height:28px;background:#ffffff;"></div>
<div style="left:1688px;top:1097px;width:1px;height:28px;background:#a0a0a0;"></div>
<div style="left:1689px;top:1097px;width:1px;height:28px;background:#ffffff;"></div>
<div style="left:1722px;top:1097px;width:1px;height:28px;background:#a0a0a0;"></div>
<div style="left:1723px;top:1097px;width:1px;height:28px;background:#ffffff;"></div>
<div style="left:1756px;top:1097px;width:1px;height:28px;background:#a0a0a0;"></div>
<div style="left:1757px;top:1097px;width:1px;height:28px;background:#ffffff;"></div>
<svg style="left:1697px;top:1102px" width="18" height="18" viewBox="0 0 18 18"><circle cx="9" cy="9" r="6.5" fill="#9a9a9a"/><rect x="8" y="5" width="2" height="8" fill="#fff"/><path d="M2 2l14 14" stroke="#ff0000" stroke-width="2.2"/></svg>
<div class="t" style="left:1732px;top:1104.84px;font-size:12px;line-height:12px;color:#000;">RU</div>
<div style="left:0px;top:0px;width:1px;height:1127px;background:#6d6d6d;"></div>
<div style="left:1px;top:0px;width:1px;height:1127px;background:#a0a0a0;"></div>
<div style="left:0px;top:0px;width:1760px;height:1px;background:#6d6d6d;"></div>
<div style="left:1758px;top:0px;width:2px;height:1127px;background:#6d6d6d;"></div>
<div style="left:1756px;top:100px;width:2px;height:1027px;background:#727272;"></div>
<div style="left:1756px;top:1px;width:1px;height:23px;background:#a0a0a0;"></div>
<div style="left:1757px;top:1px;width:1px;height:99px;background:#ffffff;"></div>
<div style="left:0px;top:1125px;width:1760px;height:2px;background:#777;"></div>
<div style="left:1758px;top:808px;width:1px;height:4px;background:#a02828;"></div>
<div style="left:1758px;top:819px;width:1px;height:30px;background:#1f4a70;"></div>
<div style="left:1758px;top:849px;width:1px;height:4px;background:#a02828;"></div>
<div style="left:746px;top:424px;width:292px;height:106px;background:#f0f0f0;border:1px solid #a0a0a0;box-sizing:border-box"></div>
<div class="t" style="left:771px;top:431.84px;font-size:12px;line-height:12px;color:#000;">Учитывать ПНР только "Вхолостую"</div>
<div class="t" style="left:991px;top:431.84px;font-size:12px;line-height:12px;color:#000;">Ctrl+T</div>
<div class="t" style="left:771px;top:452.84px;font-size:12px;line-height:12px;color:#000;">Обновить признак ПР/НПР для ЛС/ОСР</div>
<div style="left:750px;top:473px;width:284px;height:1px;background:#a0a0a0;"></div>
<div style="left:750px;top:474px;width:284px;height:1px;background:#ffffff;"></div>
<div style="left:749px;top:477px;width:285px;height:21px;background:#0078d7;"></div>
<div class="t" style="left:771px;top:481.84px;font-size:12px;line-height:12px;color:#fff;">Экспорт</div>
<svg style="left:1023px;top:483px" width="5" height="9" viewBox="0 0 5 9"><path d="M0 0l4.5 4.5L0 9z" fill="#fff"/></svg>
<div style="left:750px;top:502px;width:284px;height:1px;background:#a0a0a0;"></div>
<div style="left:750px;top:503px;width:284px;height:1px;background:#ffffff;"></div>
<div class="t" style="left:771px;top:510.84px;font-size:12px;line-height:12px;color:#000;">Показывать итоги</div>
<svg style="left:1023px;top:512px" width="5" height="9" viewBox="0 0 5 9"><path d="M0 0l4.5 4.5L0 9z" fill="#000"/></svg>
<div style="left:1032px;top:474px;width:169px;height:77px;background:#f0f0f0;border:1px solid #a0a0a0;box-sizing:border-box"></div>
<svg style="left:1036px;top:480px" width="15" height="15" viewBox="0 0 15 15"><rect x="0" y="0" width="15" height="15" fill="#3a7a3a"/><rect x="1" y="1" width="13" height="13" fill="#f4fbf4"/><path d="M3 3L12 11M12 3L3 11" stroke="#2e9a3e" stroke-width="2.6"/><path d="M3 3L12 11" stroke="#a0e0a0" stroke-width="0.6"/><rect x="3" y="11" width="9" height="1" fill="#1a6a2a"/></svg>
<div class="t" style="left:1057px;top:481.84px;font-size:12px;line-height:12px;color:#000;">Экспорт в Excel</div>
<svg style="left:1036px;top:500px" width="16" height="16" viewBox="0 0 16 16"><rect x="4" y="0" width="12" height="16" fill="#d8e8e8"/><rect x="5" y="1" width="10" height="14" fill="#ffffff"/><rect x="0" y="2" width="15" height="6" fill="#e80000"/><text x="1.3" y="7.2" font-size="5.6" font-weight="bold" fill="#fff" font-family="Liberation Sans" letter-spacing="0.3">PDF</text><path d="M5 15l3-5M8 15l3-5M11 14q1-5 4-4.5" stroke="#e80000" stroke-width="1.8" fill="none"/></svg>
<div class="t" style="left:1057px;top:502.84px;font-size:12px;line-height:12px;color:#000;">Экспорт в PDF</div>
<div style="left:1036px;top:523px;width:161px;height:1px;background:#a0a0a0;"></div>
<div style="left:1036px;top:524px;width:161px;height:1px;background:#ffffff;"></div>
<div style="left:1035px;top:527px;width:19px;height:21px;background:#f0f0f0;border-top:1px solid #fff;border-left:1px solid #fff;border-right:1px solid #a0a0a0;border-bottom:1px solid #a0a0a0;box-sizing:border-box"></div>
<svg style="left:1036px;top:529px" width="17" height="16" viewBox="0 0 17 16"><rect x="7.5" y="0.5" width="8" height="3" fill="#fff" stroke="#aaa" stroke-width="0.8"/><rect x="3.5" y="2" width="12.5" height="6.5" rx="0.8" fill="#0a6ae8"/><path d="M0 5l2-2.5 2 2.5-2 2.5z" fill="#10e090"/><text x="4.2" y="7.4" font-size="6.2" font-weight="bold" fill="#fff" font-family="Liberation Sans" letter-spacing="-0.2">XML</text><rect x="1.5" y="8.5" width="14" height="6.5" fill="#f4e4f4" stroke="#888" stroke-width="0.9"/><text x="2.3" y="14.6" font-size="7.2" font-weight="bold" fill="#000" font-family="Liberation Sans" letter-spacing="-0.3">ГГЭ</text></svg>
<div style="left:1055px;top:527px;width:143px;height:21px;background:#0078d7;"></div>
<div class="t" style="left:1057px;top:531.84px;font-size:12px;line-height:12px;color:#fff;">Экспорт в XML (ГГЭ)</div>
<div style="left:690px;top:75px;width:30px;height:28px;background:transparent;border:3px solid #ff0000;box-sizing:border-box"></div>
<svg style="left:0px;top:0px" width="1760" height="1127" viewBox="0 0 1760 1127"><path d="M706 120 L671 451 L733 482" stroke="#ff0000" stroke-width="3.2" fill="none" stroke-linejoin="round"/><path d="M706 104 L697 128 L713 128z" fill="#ff0000"/><path d="M748 487 L724 485 L730 470z" fill="#ff0000"/></svg>
</body></html>
